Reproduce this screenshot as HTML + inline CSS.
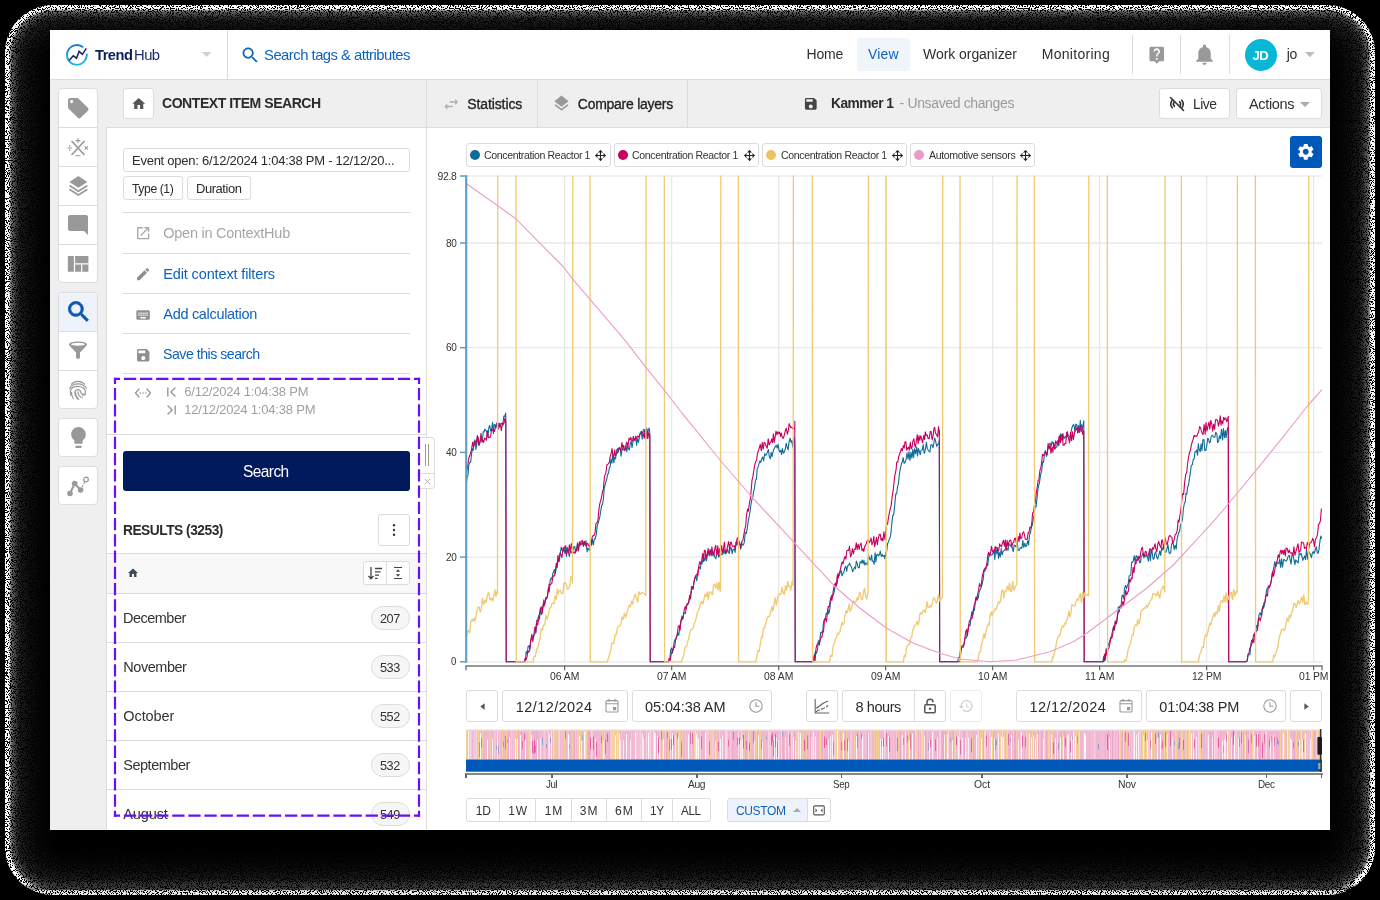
<!DOCTYPE html>
<html><head><meta charset="utf-8"><title>TrendHub</title>
<style>
html,body{margin:0;padding:0;background:#000;width:1380px;height:900px;overflow:hidden}
body{font-family:"Liberation Sans",sans-serif;position:relative}
.w{position:absolute;left:50px;top:30px;width:1280px;height:800px;background:#fff;overflow:hidden}
.w div,.w span,.w svg{position:absolute;box-sizing:content-box}
.w span{white-space:nowrap;line-height:1;will-change:opacity}
.sh{position:absolute;left:0;top:0}

</style></head>
<body>
<svg width="0" height="0" style="position:absolute"><defs>
<filter id="dz" x="0" y="0" width="100%" height="100%" color-interpolation-filters="sRGB">
<feTurbulence type="fractalNoise" baseFrequency="0.9" numOctaves="1" seed="7" result="n"/>
<feColorMatrix in="n" type="matrix" values="0 0 0 0 0 0 0 0 0 0 0 0 0 0 0 60 0 0 0 -32.4" result="dots"/>
<feComposite in="dots" in2="SourceGraphic" operator="over"/>
</filter></defs></svg>
<div class="sh" style="left:5px;top:5px;width:1370px;height:890px;border-radius:48px;background:#000;box-shadow:inset 0 0 2px 5px #fff,inset 0 0 8px 8px rgba(255,255,255,.45),inset 0 0 34px 14px rgba(255,255,255,.22);filter:url(#dz);overflow:hidden"><div style="position:absolute;left:0;right:0;bottom:0;height:12px;background:linear-gradient(to top,rgba(0,0,0,.1) 0,rgba(0,0,0,.1) 4.5px,rgba(0,0,0,.5) 5.5px,rgba(0,0,0,.3) 9px,rgba(0,0,0,0) 12px)"></div></div>

<div class="w">
<div style="left:0px;top:49px;width:1280px;height:1px;background:#dcdcdc"></div>
<svg viewBox="0 0 24 24" style="left:15.1px;top:13.8px;width:24px;height:24px;"><defs><linearGradient id="lg" x1="0" y1="0" x2="0" y2="1"><stop offset="0" stop-color="#1878d0"/><stop offset="1" stop-color="#19b9ea"/></linearGradient></defs>
<path d="M18.200 3.300A9.900 9.900 0 1 0 21.700 9.600" fill="none" stroke="url(#lg)" stroke-width="1.800"/>
<path d="M4.100 16.500L8.300 11.800 11.500 14.200 14.100 7.400 17.400 10.300 21.300 4.400" fill="none" stroke="#1d1f6e" stroke-width="1.500"/></svg>
<span id="t0" style="left:45.40px;top:17.00px;font-size:15.2px;color:#0a1e5e;font-weight:700;letter-spacing:-0.532px;transform:scaleX(0.9661);transform-origin:0 0;">Trend</span>
<span id="t1" style="left:83.90px;top:17.00px;font-size:15.2px;color:#1a2c6b;letter-spacing:-0.532px;transform:scaleX(0.9735);transform-origin:0 0;">Hub</span>
<svg viewBox="0 0 9.3 5" style="left:152.3px;top:21.6px;width:9.3px;height:5px;"><polygon points="0,0 9.299999999999983,0 4.6499999999999915,5.0" fill="#cfcfcf"/></svg>
<div style="left:177px;top:0px;width:1px;height:49px;background:#dcdcdc"></div>
<svg viewBox="0 0 24 24" style="left:189.50px;top:14.50px;width:20.5px;height:20.5px;"><path fill="#0f62be" d="M15.5 14h-.79l-.28-.27C15.41 12.59 16 11.11 16 9.5 16 5.91 13.09 3 9.5 3S3 5.91 3 9.5 5.91 16 9.5 16c1.61 0 3.09-.59 4.23-1.57l.27.28v.79l5 4.99L20.49 19l-4.99-5zm-6 0C7.01 14 5 11.99 5 9.5S7.01 5 9.5 5 14 7.01 14 9.5 11.99 14 9.5 14z"/></svg>
<span id="t2" style="left:214.20px;top:17.00px;font-size:15px;color:#0f62be;letter-spacing:-0.525px;transform:scaleX(0.9897);transform-origin:0 0;">Search tags &amp; attributes</span>
<span id="t3" style="left:756.60px;top:17.00px;font-size:14px;color:#2f2f2f;letter-spacing:-0.253px;">Home</span>
<div style="left:807px;top:8px;width:53px;height:33px;background:#f0f4fb;border-radius:3px"></div>
<span id="t4" style="left:817.90px;top:17.00px;font-size:14px;color:#0f62be;letter-spacing:0.202px;">View</span>
<span id="t5" style="left:873.00px;top:17.00px;font-size:14px;color:#2f2f2f;letter-spacing:-0.052px;">Work organizer</span>
<span id="t6" style="left:991.70px;top:17.00px;font-size:14px;color:#2f2f2f;letter-spacing:0.292px;">Monitoring</span>
<div style="left:1082px;top:5px;width:1px;height:39px;background:#dcdcdc"></div>
<div style="left:1130px;top:5px;width:1px;height:39px;background:#dcdcdc"></div>
<div style="left:1179px;top:5px;width:1px;height:39px;background:#dcdcdc"></div>
<svg viewBox="0 0 24 24" style="left:1096.50px;top:15.20px;width:19.5px;height:19.5px;"><path fill="#999" d="M19 2H5c-1.11 0-2 .9-2 2v14c0 1.1.89 2 2 2h4l3 3 3-3h4c1.1 0 2-.9 2-2V4c0-1.1-.9-2-2-2zm-6 16h-2v-2h2v2zm2.07-7.75l-.9.92C13.45 11.9 13 12.5 13 14h-2v-.5c0-1.1.45-2.1 1.17-2.83l1.24-1.26c.37-.36.59-.86.59-1.41 0-1.1-.9-2-2-2s-2 .9-2 2H8c0-2.21 1.79-4 4-4s4 1.79 4 4c0 .88-.36 1.68-.93 2.25z"/></svg>
<svg viewBox="0 0 24 24" style="left:1142.40px;top:12.30px;width:25px;height:25px;"><path fill="#999" d="M12 22c1.1 0 2-.9 2-2h-4c0 1.1.89 2 2 2zm6-6v-5c0-3.07-1.64-5.64-4.5-6.32V4c0-.83-.67-1.5-1.5-1.5s-1.5.67-1.5 1.5v.68C7.63 5.36 6 7.92 6 11v5l-2 2v1h16v-1l-2-2z"/></svg>
<div style="left:1195px;top:9px;width:32px;height:32px;background:#08b7d4;border-radius:50%"></div>
<span id="t7" style="left:1202.40px;top:19.00px;font-size:13px;color:#fff;font-weight:700;letter-spacing:-0.425px;">JD</span>
<span id="t8" style="left:1236.80px;top:17.00px;font-size:14px;color:#2f2f2f;letter-spacing:-0.406px;">jo</span>
<svg viewBox="0 0 9.8 5.2" style="left:1255px;top:22px;width:9.8px;height:5.2px;"><polygon points="0,0 9.799999999999955,0 4.899999999999977,5.200000000000003" fill="#bbb"/></svg>
<div style="left:0px;top:50px;width:1280px;height:47px;background:#efefef"></div>
<div style="left:56px;top:97px;width:1224px;height:1px;background:#dcdcdc"></div>
<div style="left:0px;top:97px;width:56px;height:703px;background:#efefef"></div>
<div style="left:56px;top:97px;width:1px;height:703px;background:#dcdcdc"></div>
<div style="left:376px;top:50px;width:1px;height:750px;background:#dcdcdc"></div>
<div style="left:73px;top:58px;width:29px;height:29px;background:#fff;border:1px solid #dcdcdc;border-radius:3px;"></div>
<svg viewBox="0 0 24 24" style="left:80.50px;top:66.00px;width:15.5px;height:15.5px;"><path fill="#555" d="M10 20v-6h4v6h5v-8h3L12 3 2 12h3v8z"/></svg>
<span id="t9" style="left:112.30px;top:65.00px;font-size:15px;color:#2b2b2b;font-weight:700;letter-spacing:-0.525px;transform:scaleX(0.9379);transform-origin:0 0;">CONTEXT ITEM SEARCH</span>
<svg viewBox="0 0 24 24" style="left:391.50px;top:65.00px;width:18.5px;height:18.5px;"><path fill="#b0b0b0" d="M6.99 11L3 15l3.99 4v-3H14v-2H6.99v-3zM21 9l-3.99-4v3H10v2h7.01v3L21 9z"/></svg>
<span id="t10" style="left:417.20px;top:67.00px;font-size:14px;color:#222;letter-spacing:-0.102px;-webkit-text-stroke:.3px #222;">Statistics</span>
<div style="left:487px;top:50px;width:1px;height:47px;background:#dcdcdc"></div>
<svg viewBox="0 0 24 24" style="left:502.30px;top:64.00px;width:19px;height:19px;"><path fill="#999" d="M11.99 18.54l-7.37-5.73L3 14.07l9 7 9-7-1.63-1.27-7.38 5.74zM12 16l7.36-5.73L21 9l-9-7-9 7 1.63 1.27L12 16z"/></svg>
<span id="t11" style="left:527.80px;top:67.00px;font-size:14px;color:#222;letter-spacing:-0.264px;-webkit-text-stroke:.3px #222;">Compare layers</span>
<div style="left:637px;top:50px;width:1px;height:47px;background:#dcdcdc"></div>
<svg viewBox="0 0 24 24" style="left:753.20px;top:66.20px;width:15.6px;height:15.6px;"><path fill="#444" d="M17 3H5c-1.11 0-2 .9-2 2v14c0 1.1.89 2 2 2h14c1.1 0 2-.9 2-2V7l-4-4zm-5 16c-1.66 0-3-1.34-3-3s1.34-3 3-3 3 1.34 3 3-1.34 3-3 3zm3-10H5V5h10v4z"/></svg>
<span id="t12" style="left:781.40px;top:66.00px;font-size:14px;color:#2b2b2b;font-weight:700;letter-spacing:-0.490px;transform:scaleX(0.9802);transform-origin:0 0;">Kammer 1</span>
<span id="t13" style="left:849.60px;top:66.00px;font-size:14px;color:#9a9a9a;letter-spacing:-0.365px;">- Unsaved changes</span>
<div style="left:1109px;top:58px;width:69px;height:29px;background:#fff;border:1px solid #dcdcdc;border-radius:3px;"></div>
<svg viewBox="0 0 18 18" style="left:1118px;top:65px;width:18px;height:18px;"><g fill="none" stroke="#333" stroke-width="1.6" stroke-linecap="round">
<path d="M4.2 12.8A6.2 6.2 0 0 1 4.2 5.2"/><path d="M13.8 5.2A6.2 6.2 0 0 1 13.8 12.8"/>
<path d="M6.4 11.3A3.4 3.4 0 0 1 6.4 6.7"/><path d="M11.6 6.7A3.4 3.4 0 0 1 11.6 11.3"/>
<path d="M2.5 2.5L15.5 15.5"/></g></svg>
<span id="t14" style="left:1142.50px;top:67.00px;font-size:14.5px;color:#2f2f2f;letter-spacing:-0.508px;transform:scaleX(0.9567);transform-origin:0 0;">Live</span>
<div style="left:1186px;top:58px;width:84px;height:29px;background:#fff;border:1px solid #dcdcdc;border-radius:3px;"></div>
<span id="t15" style="left:1199.00px;top:67.00px;font-size:14.5px;color:#2f2f2f;letter-spacing:-0.327px;">Actions</span>
<svg viewBox="0 0 10 5" style="left:1250px;top:71.5px;width:10px;height:5px;"><polygon points="0,0 10,0 5.0,5.0" fill="#aaa"/></svg>
<div style="left:8px;top:58px;width:38px;height:193px;background:#fff;border:1px solid #dcdcdc;border-radius:4px;"></div>
<div style="left:9px;top:97px;width:38px;height:1px;background:#dcdcdc"></div>
<div style="left:9px;top:136px;width:38px;height:1px;background:#dcdcdc"></div>
<div style="left:9px;top:175px;width:38px;height:1px;background:#dcdcdc"></div>
<div style="left:9px;top:214px;width:38px;height:1px;background:#dcdcdc"></div>
<div style="left:8px;top:262px;width:38px;height:115px;background:#fff;border:1px solid #dcdcdc;border-radius:4px;"></div>
<div style="left:9px;top:301px;width:38px;height:1px;background:#dcdcdc"></div>
<div style="left:9px;top:340px;width:38px;height:1px;background:#dcdcdc"></div>
<div style="left:9px;top:263px;width:38px;height:38px;background:#eef3fb;border-radius:3px 3px 0 0"></div>
<div style="left:8px;top:388px;width:38px;height:37px;background:#fff;border:1px solid #dcdcdc;border-radius:4px;"></div>
<div style="left:8px;top:436px;width:38px;height:37px;background:#fff;border:1px solid #dcdcdc;border-radius:4px;"></div>
<svg viewBox="0 0 24 24" style="left:15.90px;top:65.60px;width:24.5px;height:24.5px;"><path fill="#999" d="M21.41 11.58l-9-9C12.05 2.22 11.55 2 11 2H4c-1.1 0-2 .9-2 2v7c0 .55.22 1.05.59 1.42l9 9c.36.36.86.58 1.41.58.55 0 1.05-.22 1.41-.59l7-7c.37-.36.59-.86.59-1.41 0-.55-.23-1.06-.59-1.42zM5.5 7C4.67 7 4 6.33 4 5.5S4.67 4 5.5 4 7 4.67 7 5.5 6.33 7 5.5 7z"/></svg>
<svg viewBox="0 0 24 24" style="left:16.2px;top:106px;width:24px;height:24px;"><g stroke="#999" stroke-width="1.7" fill="none" stroke-linecap="round"><path d="M6 5.5L18 18.5M18 5.5L6 18.5"/>
<path d="M12 2.6v4M10 4.6h4" stroke-width="1.1"/><path d="M10 19.8h4" stroke-width="1.1"/>
<path d="M1.8 12h4" stroke-width="1.1"/><path d="M19 10.6l2.6 2.6M21.6 10.6L19 13.2" stroke-width="1.1"/></g>
<circle cx="3.8" cy="9.9" r=".8" fill="#999"/><circle cx="3.8" cy="14.1" r=".8" fill="#999"/></svg>
<svg viewBox="0 0 24 24" style="left:16.8px;top:143.6px;width:22.8px;height:22.8px;"><path d="M12 2.200L2.500 8.300L12 14.400L21.500 8.300Z" fill="#999"/><g fill="none" stroke="#999" stroke-width="1.900" stroke-linejoin="round" stroke-linecap="round"><path d="M3.300 12.600L12 18.100L20.700 12.600"/><path d="M3.300 16.600L12 22.100L20.700 16.600"/></g></svg>
<svg viewBox="0 0 24 24" style="left:16.00px;top:182.50px;width:24px;height:24px;"><path fill="#999" d="M21.99 4c0-1.1-.89-2-1.99-2H4c-1.1 0-2 .9-2 2v12c0 1.1.9 2 2 2h14l4 4-.01-18z"/></svg>
<svg viewBox="0 0 24 24" style="left:12.70px;top:220.30px;width:29px;height:29px;"><path fill="#999" d="M10 18h5v-6h-5v6zm-6 0h5V5H4v13zm12 0h5v-6h-5v6zM10 5v6h11V5H10z"/></svg>
<svg viewBox="0 0 24 24" style="left:15.20px;top:268.20px;width:27.5px;height:27.5px;"><path stroke="#0b57b4" stroke-width=".7" fill="#0b57b4" d="M15.5 14h-.79l-.28-.27C15.41 12.59 16 11.11 16 9.5 16 5.91 13.09 3 9.5 3S3 5.91 3 9.5 5.91 16 9.5 16c1.61 0 3.09-.59 4.23-1.57l.27.28v.79l5 4.99L20.49 19l-4.99-5zm-6 0C7.01 14 5 11.99 5 9.5S7.01 5 9.5 5 14 7.01 14 9.5 11.99 14 9.5 14z"/></svg>
<svg viewBox="0 0 24 24" style="left:16px;top:308.5px;width:24px;height:24px;"><path d="M3 5.400C3 3.500 7 2.400 12 2.400s9 1.100 9 3c0 .6-.3 1-.8 1.500L14 13.600V18.300c0 .9-.9 1.600-2 1.600s-2-.7-2-1.600V13.600L3.800 6.900C3.300 6.400 3 6 3 5.400z" fill="#999"/><ellipse cx="12" cy="5.200" rx="7" ry="1.500" fill="#fff"/></svg>
<svg viewBox="0 0 24 24" style="left:16px;top:347.5px;width:24px;height:24px;"><g fill="none" stroke="#999" stroke-width="1.2" stroke-linecap="round">
<path d="M5.500 6.200C7.200 4.300 9.500 3.300 12 3.300s4.800 1 6.500 2.900"/>
<path d="M3.600 10.500C5.300 7.700 8.400 5.900 12 5.900s6.700 1.800 8.400 4.600"/>
<path d="M5 17.500c-.6-1.700-.8-3.300-.5-4.900C5.100 9.900 8.200 8.300 12 8.300s7 2.200 7.400 5.200c.2 1.300-.5 2.600-1.800 2.800-1.300.2-2.500-.7-2.800-2-.3-1.500-1.400-2.600-2.900-2.600-1.700 0-3 1.300-3 3 0 2.500 1.100 4.600 2.700 6.300"/>
<path d="M7.200 20.300c-1.300-2-1.900-4-1.700-6"/>
<path d="M12 13.800c0 2.900 1.600 5.200 4.300 5.900"/>
<path d="M9.400 14.300c0 3 1.500 5.400 3.300 6.900"/>
<path d="M16.800 17.200c1.200.1 2.200-.3 2.900-1"/></g></svg>
<svg viewBox="0 0 24 24" style="left:15.60px;top:395.00px;width:25px;height:25px;"><path fill="#999" d="M9 21c0 .55.45 1 1 1h4c.55 0 1-.45 1-1v-1H9v1zm3-19C8.14 2 5 5.14 5 9c0 2.38 1.19 4.47 3 5.74V17c0 .55.45 1 1 1h6c.55 0 1-.45 1-1v-2.26c1.81-1.27 3-3.36 3-5.74 0-3.86-3.14-7-7-7z"/></svg>
<svg viewBox="0 0 24 24" style="left:16px;top:444px;width:24px;height:24px;"><g stroke="#999" fill="none"><path d="M4 19.500L8.700 9.500L14.600 16" stroke-width="2"/><path d="M14.600 16L19.700 6.200" stroke-width="1.300" stroke-dasharray="1.800 1.600"/></g>
<circle cx="4" cy="19.500" r="2.800" fill="#999"/><circle cx="8.700" cy="9.500" r="2.800" fill="#999"/><circle cx="14.600" cy="16" r="2.800" fill="#999"/><circle cx="20" cy="5.500" r="2.300" fill="#fff" stroke="#999" stroke-width="1.300"/></svg>
<div style="left:73px;top:118px;width:285px;height:22px;background:#fff;border:1px solid #dcdcdc;border-radius:3px;"></div>
<span id="t16" style="left:82.00px;top:124.00px;font-size:13px;color:#2b2b2b;letter-spacing:-0.254px;">Event open: 6/12/2024 1:04:38 PM - 12/12/20...</span>
<div style="left:73px;top:146px;width:58px;height:22px;background:#fff;border:1px solid #dcdcdc;border-radius:3px;"></div>
<span id="t17" style="left:82.00px;top:152.00px;font-size:13px;color:#2b2b2b;letter-spacing:-0.455px;transform:scaleX(0.9393);transform-origin:0 0;">Type (1)</span>
<div style="left:137px;top:146px;width:62px;height:22px;background:#fff;border:1px solid #dcdcdc;border-radius:3px;"></div>
<span id="t18" style="left:146.30px;top:152.00px;font-size:13px;color:#2b2b2b;letter-spacing:-0.455px;transform:scaleX(0.9988);transform-origin:0 0;">Duration</span>
<div style="left:73px;top:182px;width:287px;height:1px;background:#dcdcdc"></div>
<div style="left:73px;top:223px;width:287px;height:1px;background:#dcdcdc"></div>
<div style="left:73px;top:263px;width:287px;height:1px;background:#dcdcdc"></div>
<div style="left:73px;top:303px;width:287px;height:1px;background:#dcdcdc"></div>
<div style="left:73px;top:343px;width:287px;height:1px;background:#dcdcdc"></div>
<svg viewBox="0 0 24 24" style="left:85.00px;top:194.80px;width:16.3px;height:16.3px;"><path fill="#a8a8a8" d="M19 19H5V5h7V3H5c-1.11 0-2 .9-2 2v14c0 1.1.89 2 2 2h14c1.1 0 2-.9 2-2v-7h-2v7zM14 3v2h3.59l-9.83 9.83 1.41 1.41L19 6.41V10h2V3h-7z"/></svg>
<span id="t19" style="left:113.30px;top:196.00px;font-size:14.5px;color:#a6a6a6;letter-spacing:-0.264px;">Open in ContextHub</span>
<svg viewBox="0 0 24 24" style="left:85.00px;top:236.20px;width:16.2px;height:16.2px;"><path fill="#8f8f8f" d="M3 17.25V21h3.75L17.81 9.94l-3.75-3.75L3 17.25zM20.71 7.04c.39-.39.39-1.02 0-1.41l-2.34-2.34c-.39-.39-1.02-.39-1.41 0l-1.83 1.83 3.75 3.75 1.83-1.83z"/></svg>
<span id="t20" style="left:113.30px;top:237.00px;font-size:14.5px;color:#0f62be;letter-spacing:-0.139px;">Edit context filters</span>
<svg viewBox="0 0 24 24" style="left:85.00px;top:276.50px;width:16.2px;height:16.2px;"><path fill="#8f8f8f" d="M20 5H4c-1.1 0-1.99.9-1.99 2L2 17c0 1.1.9 2 2 2h16c1.1 0 2-.9 2-2V7c0-1.1-.9-2-2-2zm-9 3h2v2h-2V8zm0 3h2v2h-2v-2zM8 8h2v2H8V8zm0 3h2v2H8v-2zm-1 2H5v-2h2v2zm0-3H5V8h2v2zm9 7H8v-2h8v2zm0-4h-2v-2h2v2zm0-3h-2V8h2v2zm3 3h-2v-2h2v2zm0-3h-2V8h2v2z"/></svg>
<span id="t21" style="left:113.30px;top:277.00px;font-size:14.5px;color:#0f62be;letter-spacing:-0.310px;">Add calculation</span>
<svg viewBox="0 0 24 24" style="left:84.50px;top:316.50px;width:16.5px;height:16.5px;"><path fill="#8f8f8f" d="M17 3H5c-1.11 0-2 .9-2 2v14c0 1.1.89 2 2 2h14c1.1 0 2-.9 2-2V7l-4-4zm-5 16c-1.66 0-3-1.34-3-3s1.34-3 3-3 3 1.34 3 3-1.34 3-3 3zm3-10H5V5h10v4z"/></svg>
<span id="t22" style="left:113.30px;top:317.00px;font-size:14.5px;color:#0f62be;letter-spacing:-0.508px;transform:scaleX(0.9760);transform-origin:0 0;">Save this search</span>
<svg viewBox="0 0 18 14" style="left:84px;top:356px;width:18px;height:14px;"><g fill="none" stroke="#999" stroke-width="1.3" stroke-linecap="round" stroke-linejoin="round"><path d="M5 3L1.500 7L5 11"/><path d="M13 3L16.500 7L13 11"/></g><circle cx="6.300" cy="7" r=".8" fill="#999"/><circle cx="9" cy="7" r=".8" fill="#999"/><circle cx="11.700" cy="7" r=".8" fill="#999"/></svg>
<svg viewBox="0 0 11 12" style="left:116px;top:356px;width:11px;height:12px;"><g fill="none" stroke="#999" stroke-width="1.400" stroke-linecap="round" stroke-linejoin="round"><path d="M1.800 2v8"/><path d="M9 2L4.800 6L9 10"/></g></svg>
<svg viewBox="0 0 11 12" style="left:116px;top:374px;width:11px;height:12px;"><g fill="none" stroke="#999" stroke-width="1.400" stroke-linecap="round" stroke-linejoin="round"><path d="M9.200 2v8"/><path d="M2 2L6.200 6L2 10"/></g></svg>
<span id="t23" style="left:134.20px;top:355.00px;font-size:13px;color:#a0a0a0;letter-spacing:-0.186px;">6/12/2024 1:04:38 PM</span>
<span id="t24" style="left:134.20px;top:373.00px;font-size:13px;color:#a0a0a0;letter-spacing:-0.194px;">12/12/2024 1:04:38 PM</span>
<div style="left:57px;top:404px;width:319px;height:1px;background:#dcdcdc"></div>
<div style="left:73px;top:421px;width:287px;height:40px;background:#001a5c;border-radius:3px"></div>
<span id="t25" style="left:193.30px;top:434.00px;font-size:16px;color:#fff;letter-spacing:-0.560px;transform:scaleX(0.9644);transform-origin:0 0;">Search</span>
<span id="t26" style="left:73.30px;top:493.00px;font-size:14.5px;color:#2b2b2b;font-weight:700;letter-spacing:-0.508px;transform:scaleX(0.9476);transform-origin:0 0;">RESULTS (3253)</span>
<div style="left:328px;top:484px;width:30px;height:30px;background:#fff;border:1px solid #dcdcdc;border-radius:3px;"></div>
<svg viewBox="0 0 8 16" style="left:340px;top:492px;width:8px;height:16px;"><circle cx="4" cy="3.200" r="1.200" fill="#333"/><circle cx="4" cy="8" r="1.200" fill="#333"/><circle cx="4" cy="12.800" r="1.200" fill="#333"/></svg>
<div style="left:57px;top:523px;width:319px;height:1px;background:#dcdcdc"></div>
<div style="left:57px;top:524px;width:319px;height:39px;background:#f8f8f8"></div>
<svg viewBox="0 0 24 24" style="left:77.00px;top:537.00px;width:12px;height:12px;"><path fill="#3d4d5c" d="M10 20v-6h4v6h5v-8h3L12 3 2 12h3v8z"/></svg>
<div style="left:313px;top:531px;width:45px;height:22px;background:#fff;border:1px solid #dcdcdc;border-radius:3px;"></div>
<div style="left:336px;top:532px;width:1px;height:22px;background:#dcdcdc"></div>
<svg viewBox="0 0 16 16" style="left:317px;top:535px;width:16px;height:16px;"><g fill="none" stroke="#444" stroke-width="1.300"><path d="M4 2v11.500M1.500 11L4 13.800L6.500 11"/><path d="M8 3.500h7M8 6.800h5.500M8 10.100h4M8 13.400h2.500"/></g></svg>
<svg viewBox="0 0 16 16" style="left:340px;top:535px;width:16px;height:16px;"><g fill="none" stroke="#444" stroke-width="1.200"><path d="M4 2.500h8M4 13.500h8"/></g><path d="M8 4.200L10.200 6.800H5.800zM8 11.800L10.200 9.200H5.800z" fill="#444"/></svg>
<div style="left:57px;top:563px;width:319px;height:1px;background:#dcdcdc"></div>
<span id="t27" style="left:73.30px;top:581.00px;font-size:14.5px;color:#333;letter-spacing:-0.508px;transform:scaleX(0.9994);transform-origin:0 0;">December</span>
<div style="left:321px;top:576px;width:37px;height:22px;background:#f6f6f6;border:1px solid #dcdcdc;border-radius:12px;"></div>
<span id="t28" style="left:330.30px;top:582.00px;font-size:13px;color:#333;letter-spacing:-0.455px;transform:scaleX(0.9763);transform-origin:0 0;">207</span>
<div style="left:57px;top:612px;width:319px;height:1px;background:#dcdcdc"></div>
<span id="t29" style="left:73.30px;top:630.00px;font-size:14.5px;color:#333;letter-spacing:-0.470px;">November</span>
<div style="left:321px;top:625px;width:37px;height:22px;background:#f6f6f6;border:1px solid #dcdcdc;border-radius:12px;"></div>
<span id="t30" style="left:330.30px;top:631.00px;font-size:13px;color:#333;letter-spacing:-0.455px;transform:scaleX(0.9763);transform-origin:0 0;">533</span>
<div style="left:57px;top:661px;width:319px;height:1px;background:#dcdcdc"></div>
<span id="t31" style="left:73.30px;top:679.00px;font-size:14.5px;color:#333;letter-spacing:-0.099px;">October</span>
<div style="left:321px;top:674px;width:37px;height:22px;background:#f6f6f6;border:1px solid #dcdcdc;border-radius:12px;"></div>
<span id="t32" style="left:330.30px;top:680.00px;font-size:13px;color:#333;letter-spacing:-0.455px;transform:scaleX(0.9763);transform-origin:0 0;">552</span>
<div style="left:57px;top:710px;width:319px;height:1px;background:#dcdcdc"></div>
<span id="t33" style="left:73.30px;top:728.00px;font-size:14.5px;color:#333;letter-spacing:-0.492px;">September</span>
<div style="left:321px;top:723px;width:37px;height:22px;background:#f6f6f6;border:1px solid #dcdcdc;border-radius:12px;"></div>
<span id="t34" style="left:330.30px;top:729.00px;font-size:13px;color:#333;letter-spacing:-0.455px;transform:scaleX(0.9763);transform-origin:0 0;">532</span>
<div style="left:57px;top:759px;width:319px;height:1px;background:#dcdcdc"></div>
<span id="t35" style="left:73.30px;top:777.00px;font-size:14.5px;color:#333;letter-spacing:-0.131px;">August</span>
<div style="left:321px;top:772px;width:37px;height:22px;background:#f6f6f6;border:1px solid #dcdcdc;border-radius:12px;"></div>
<span id="t36" style="left:330.30px;top:778.00px;font-size:13px;color:#333;letter-spacing:-0.455px;transform:scaleX(0.9763);transform-origin:0 0;">549</span>
<div style="left:370px;top:407px;width:14px;height:50px;background:#fff;border:1px solid #dcdcdc;border-left:none;border-radius:0 4px 4px 0"></div>
<div style="left:370px;top:443px;width:14px;height:1px;background:#dcdcdc"></div>
<div style="left:375.3px;top:414px;width:1px;height:22px;background:#999"></div>
<div style="left:378.3px;top:414px;width:1px;height:22px;background:#999"></div>
<svg viewBox="0 0 7 7" style="left:373.7px;top:447.5px;width:7px;height:7px;"><path d="M.8 .8L6.200 6.200M6.200 .8L.8 6.200" stroke="#aaa" stroke-width=".9" fill="none"/></svg>
<div style="left:416px;top:113px;width:142.5px;height:22px;background:#fff;border:1px solid #dcdcdc;border-radius:3px;"></div>
<div style="left:420px;top:120.3px;width:10.2px;height:10.2px;background:#0f6b99;border-radius:50%"></div>
<span id="t37" style="left:433.90px;top:120.00px;font-size:11px;color:#333;letter-spacing:-0.385px;transform:scaleX(0.9615);transform-origin:0 0;">Concentration Reactor 1</span>
<svg viewBox="0 0 11 11" style="left:545.1px;top:119.9px;width:11px;height:11px;"><g fill="none" stroke="#222" stroke-width="1.05" stroke-linecap="round" stroke-linejoin="round"><path d="M5.500 .8v9.400M.8 5.500h9.400"/><path d="M3.900 2.300L5.500 .7L7.100 2.300M3.900 8.700L5.500 10.300L7.100 8.700M2.300 3.900L.7 5.500L2.300 7.100M8.700 3.900L10.300 5.500L8.700 7.100"/></g></svg>
<div style="left:564.3px;top:113px;width:142.7px;height:22px;background:#fff;border:1px solid #dcdcdc;border-radius:3px;"></div>
<div style="left:568.3px;top:120.3px;width:10.2px;height:10.2px;background:#c6005f;border-radius:50%"></div>
<span id="t38" style="left:582.40px;top:120.00px;font-size:11px;color:#333;letter-spacing:-0.385px;transform:scaleX(0.9597);transform-origin:0 0;">Concentration Reactor 1</span>
<svg viewBox="0 0 11 11" style="left:693.6px;top:119.9px;width:11px;height:11px;"><g fill="none" stroke="#222" stroke-width="1.05" stroke-linecap="round" stroke-linejoin="round"><path d="M5.500 .8v9.400M.8 5.500h9.400"/><path d="M3.900 2.300L5.500 .7L7.100 2.300M3.900 8.700L5.500 10.300L7.100 8.700M2.300 3.900L.7 5.500L2.300 7.100M8.700 3.900L10.300 5.500L8.700 7.100"/></g></svg>
<div style="left:712.3px;top:113px;width:142.4px;height:22px;background:#fff;border:1px solid #dcdcdc;border-radius:3px;"></div>
<div style="left:716.3px;top:120.3px;width:10.2px;height:10.2px;background:#edc25f;border-radius:50%"></div>
<span id="t39" style="left:730.70px;top:120.00px;font-size:11px;color:#333;letter-spacing:-0.385px;transform:scaleX(0.9588);transform-origin:0 0;">Concentration Reactor 1</span>
<svg viewBox="0 0 11 11" style="left:841.7px;top:119.9px;width:11px;height:11px;"><g fill="none" stroke="#222" stroke-width="1.05" stroke-linecap="round" stroke-linejoin="round"><path d="M5.500 .8v9.400M.8 5.500h9.400"/><path d="M3.900 2.300L5.500 .7L7.100 2.300M3.900 8.700L5.500 10.300L7.100 8.700M2.300 3.900L.7 5.500L2.300 7.100M8.700 3.900L10.300 5.500L8.700 7.100"/></g></svg>
<div style="left:860.3px;top:113px;width:122.7px;height:22px;background:#fff;border:1px solid #dcdcdc;border-radius:3px;"></div>
<div style="left:864.3px;top:120.3px;width:10.2px;height:10.2px;background:#ea9bc8;border-radius:50%"></div>
<span id="t40" style="left:879.00px;top:120.00px;font-size:11px;color:#333;letter-spacing:-0.385px;transform:scaleX(0.9626);transform-origin:0 0;">Automotive sensors</span>
<svg viewBox="0 0 11 11" style="left:970.2px;top:119.9px;width:11px;height:11px;"><g fill="none" stroke="#222" stroke-width="1.05" stroke-linecap="round" stroke-linejoin="round"><path d="M5.500 .8v9.400M.8 5.500h9.400"/><path d="M3.900 2.300L5.500 .7L7.100 2.300M3.900 8.700L5.500 10.300L7.100 8.700M2.300 3.900L.7 5.500L2.300 7.100M8.700 3.900L10.300 5.500L8.700 7.100"/></g></svg>
<div style="left:1240px;top:106px;width:32px;height:32px;background:#0059b8;border-radius:3px"></div>
<svg viewBox="0 0 24 24" style="left:1246.20px;top:112.20px;width:19.6px;height:19.6px;"><path fill="#fff" d="M19.14 12.94c.04-.3.06-.61.06-.94 0-.32-.02-.64-.07-.94l2.03-1.58c.18-.14.23-.41.12-.61l-1.92-3.32c-.12-.22-.37-.29-.59-.22l-2.39.96c-.5-.38-1.03-.7-1.62-.94l-.36-2.54c-.04-.24-.24-.41-.48-.41h-3.84c-.24 0-.43.17-.47.41l-.36 2.54c-.59.24-1.13.57-1.62.94l-2.39-.96c-.22-.08-.47 0-.59.22L2.74 8.87c-.12.21-.08.47.12.61l2.03 1.58c-.05.3-.09.63-.09.94s.02.64.07.94l-2.03 1.58c-.18.14-.23.41-.12.61l1.92 3.32c.12.22.37.29.59.22l2.39-.96c.5.38 1.03.7 1.62.94l.36 2.54c.05.24.24.41.48.41h3.84c.24 0 .44-.17.47-.41l.36-2.54c.59-.24 1.13-.56 1.62-.94l2.39.96c.22.08.47 0 .59-.22l1.92-3.32c.12-.22.07-.47-.12-.61l-2.01-1.58zM12 15.6c-1.98 0-3.6-1.62-3.6-3.6s1.62-3.6 3.6-3.6 3.6 1.62 3.6 3.6-1.62 3.6-3.6 3.6z"/></svg>
<svg viewBox="427 128 903 562" style="left:377px;top:98px;width:903px;height:562px"><path d="M466.0 661.8H1322.0" stroke="#e9e9e9" stroke-width="1.3"/><path d="M466.0 557.1H1322.0" stroke="#e9e9e9" stroke-width="1.3"/><path d="M466.0 452.4H1322.0" stroke="#e9e9e9" stroke-width="1.3"/><path d="M466.0 347.7H1322.0" stroke="#e9e9e9" stroke-width="1.3"/><path d="M466.0 243.0H1322.0" stroke="#e9e9e9" stroke-width="1.3"/><path d="M466.0 176.0H1322.0" stroke="#ececec" stroke-width="1.6"/><path d="M564.7 176.0V661.8" stroke="#e6e6e6" stroke-width="1.2"/><path d="M671.7 176.0V661.8" stroke="#e6e6e6" stroke-width="1.2"/><path d="M778.7 176.0V661.8" stroke="#e6e6e6" stroke-width="1.2"/><path d="M885.7 176.0V661.8" stroke="#e6e6e6" stroke-width="1.2"/><path d="M992.7 176.0V661.8" stroke="#e6e6e6" stroke-width="1.2"/><path d="M1099.7 176.0V661.8" stroke="#e6e6e6" stroke-width="1.2"/><path d="M1206.7 176.0V661.8" stroke="#e6e6e6" stroke-width="1.2"/><path d="M1313.7 176.0V661.8" stroke="#e6e6e6" stroke-width="1.2"/><clipPath id="pc"><rect x="466.0" y="175.4" width="856.0" height="488.29999999999995"/></clipPath><g clip-path="url(#pc)" fill="none" stroke-linejoin="round"><path d="M466.0 487.9L467.0 477.6L467.9 475.5L468.9 464.6L469.9 462.1L470.7 462.2L471.6 453.4L472.4 448.6L473.2 450.5L473.9 442.1L475.0 440.0L475.9 449.4L476.8 442.6L477.6 436.0L478.5 445.2L479.5 444.5L480.6 439.3L481.5 439.8L482.4 441.0L483.2 431.7L484.0 432.1L484.8 429.0L485.9 430.7L486.9 432.0L487.9 436.9L488.9 427.3L489.7 425.4L490.7 431.0L491.6 429.7L492.5 422.2L493.4 433.6L494.2 424.3L495.3 426.2L496.2 424.8L497.2 428.1L498.2 423.1L499.1 427.1L499.9 424.4L501.0 423.6L502.0 423.3L502.8 425.8L503.8 416.0L504.7 416.5L505.7 413.1L505.8 417.9L506.2 661.8L506.7 661.8L507.8 661.8L508.9 661.8L509.9 661.8L510.9 661.8L511.9 661.8L512.7 661.8L513.6 661.8L514.6 661.8L515.4 661.8L516.2 661.8L517.3 661.8L518.3 661.8L519.2 661.8L520.2 661.8L521.0 661.8L521.8 661.8L522.7 661.8L523.6 661.8L524.4 661.8L525.2 661.5L526.2 651.5L527.3 653.7L528.1 646.2L529.0 645.8L529.8 648.9L530.8 639.6L531.9 638.5L532.8 636.0L533.8 635.7L534.8 633.2L535.8 632.9L536.8 620.0L537.5 621.5L538.5 615.9L539.5 619.2L540.4 609.2L541.4 614.6L542.2 612.6L543.0 606.7L543.8 599.8L544.7 604.6L545.7 599.7L546.6 598.1L547.4 596.0L548.3 587.8L549.2 591.9L550.2 580.3L551.3 578.0L552.0 579.2L552.8 573.7L553.6 571.8L554.4 569.5L555.3 573.7L556.2 568.2L557.2 565.2L558.2 559.7L559.3 561.2L560.2 554.0L561.2 547.1L562.1 550.1L563.0 551.5L563.8 548.3L564.9 553.5L565.7 545.6L566.5 556.5L567.3 547.4L568.3 551.5L569.3 556.4L570.3 551.1L571.2 551.5L572.1 553.2L572.8 550.5L573.7 547.0L574.7 546.5L575.6 552.1L576.5 548.9L577.5 542.9L578.3 548.5L579.2 545.4L580.3 544.4L581.2 544.4L582.2 542.9L583.2 544.8L584.0 541.7L584.9 545.1L586.0 540.7L587.1 551.9L587.9 548.0L588.8 549.8L589.7 550.3L590.6 539.7L591.6 545.2L592.4 539.1L593.4 545.0L594.3 538.9L595.3 538.8L596.3 534.1L597.2 526.1L598.0 523.8L598.8 520.5L599.6 518.0L600.7 511.5L601.6 505.4L602.5 504.5L603.4 498.8L604.2 488.6L604.9 485.8L606.0 481.2L606.8 479.1L607.5 474.7L608.5 473.4L609.3 467.8L610.1 466.9L611.0 459.1L611.9 463.1L612.9 454.1L613.8 462.7L614.6 457.5L615.6 458.8L616.6 450.1L617.7 448.7L618.4 451.8L619.2 447.2L620.2 448.1L621.0 456.3L622.1 448.6L623.0 449.5L624.1 450.4L624.9 449.6L625.8 445.5L626.8 451.7L627.6 445.6L628.6 449.0L629.4 450.0L630.2 444.0L631.2 441.3L632.0 447.6L633.1 441.4L634.0 438.9L635.0 440.3L635.7 436.0L636.6 445.3L637.4 438.5L638.4 442.4L639.4 437.7L640.2 432.7L641.3 431.3L642.2 439.3L643.3 430.0L644.2 429.3L645.3 435.1L646.4 427.6L647.4 438.5L648.3 430.4L649.2 428.0L649.8 432.0L650.2 661.8L650.2 661.8L651.3 661.8L652.2 661.8L653.3 661.8L654.1 661.8L655.2 661.8L656.1 661.8L657.2 661.8L658.2 661.8L659.2 661.8L660.1 661.8L660.9 661.8L661.8 661.8L662.6 661.8L663.5 661.8L664.6 661.8L665.4 661.8L666.2 661.8L667.0 661.8L667.9 661.8L668.9 661.8L669.8 660.2L670.6 650.4L671.6 647.9L672.5 653.2L673.3 647.6L674.3 641.0L675.3 639.3L676.1 639.1L677.0 635.8L677.9 632.8L678.8 635.3L679.8 626.4L680.9 621.8L681.9 616.1L682.7 619.7L683.5 614.6L684.4 612.7L685.5 613.4L686.4 605.3L687.4 604.8L688.2 603.7L689.2 599.2L690.1 597.7L691.1 592.6L692.1 586.8L693.1 588.9L693.9 582.2L695.0 577.5L695.8 575.9L696.8 580.8L697.7 572.4L698.5 568.0L699.3 567.0L700.2 569.3L701.0 563.9L702.0 563.9L703.0 559.7L704.0 558.5L704.8 560.9L705.6 554.0L706.5 560.6L707.5 553.9L708.3 552.8L709.2 555.9L710.2 549.3L711.1 553.0L712.0 555.9L712.9 550.9L713.9 554.2L714.8 556.7L715.8 558.8L716.8 553.3L717.6 551.4L718.6 557.1L719.5 555.9L720.5 553.6L721.4 554.7L722.2 554.8L723.0 549.3L724.0 553.8L724.8 549.7L725.6 551.0L726.6 553.1L727.6 548.8L728.4 552.1L729.3 553.5L730.2 547.5L731.2 547.8L732.2 553.7L733.0 549.7L734.1 548.9L735.1 552.4L736.1 541.8L737.1 545.2L737.9 540.8L738.7 540.1L739.7 542.7L740.6 549.1L741.5 542.8L742.5 544.9L743.5 544.9L744.4 541.8L745.2 532.6L746.2 533.5L747.1 529.7L748.1 521.9L748.9 517.9L750.0 511.6L751.0 504.2L751.9 499.4L752.7 497.4L753.7 491.3L754.5 487.6L755.6 480.0L756.4 479.4L757.2 468.7L758.1 466.9L758.9 464.1L759.9 460.8L760.8 462.5L761.6 459.0L762.7 457.0L763.6 460.9L764.7 453.7L765.5 455.3L766.5 454.7L767.6 451.4L768.4 449.5L769.3 456.7L770.4 458.7L771.2 452.4L772.1 456.5L773.1 451.5L774.1 448.7L775.2 446.9L776.2 445.2L777.2 448.2L778.1 444.3L779.1 450.6L780.0 451.8L780.8 450.2L781.6 454.6L782.4 448.5L783.4 453.1L784.4 451.8L785.3 449.0L786.2 443.3L787.1 446.9L788.1 449.9L789.0 442.1L790.1 438.1L790.9 442.1L791.8 440.7L792.8 447.3L793.7 436.8L794.5 440.2L794.8 442.8L795.2 661.8L795.6 661.8L796.6 661.8L797.4 661.8L798.2 661.8L799.0 661.8L799.9 661.8L800.7 661.8L801.5 661.8L802.5 661.8L803.3 661.8L804.3 661.8L805.2 661.8L806.3 661.8L807.3 661.8L808.3 661.8L809.1 661.8L810.1 661.8L810.9 661.8L812.0 661.8L812.8 661.8L813.7 661.8L814.6 654.5L815.6 651.4L816.6 653.2L817.5 649.6L818.4 640.6L819.5 645.1L820.6 632.6L821.5 631.9L822.5 633.7L823.5 622.1L824.5 619.2L825.3 618.6L826.2 613.4L827.0 614.5L827.8 609.1L828.8 613.8L829.7 609.7L830.7 601.2L831.4 595.2L832.5 596.9L833.5 594.4L834.4 590.8L835.3 584.0L836.1 586.0L837.2 583.3L837.9 573.4L838.7 575.9L839.6 574.6L840.5 571.0L841.3 570.8L842.0 575.9L842.9 573.7L843.7 572.8L844.8 567.9L845.7 566.2L846.7 571.3L847.6 565.8L848.6 565.4L849.6 562.9L850.4 565.7L851.5 567.0L852.6 571.8L853.6 569.4L854.6 567.1L855.5 568.8L856.3 561.1L857.3 563.6L858.1 567.3L859.2 568.0L860.1 561.7L861.1 563.0L862.2 559.9L863.0 563.8L863.9 560.4L864.9 565.1L865.9 562.7L866.6 564.1L867.5 564.9L868.5 555.0L869.6 558.9L870.6 560.2L871.6 555.0L872.3 561.1L873.2 561.0L874.1 564.1L875.1 552.9L875.9 561.9L876.8 554.2L877.6 554.2L878.4 556.0L879.4 554.7L880.2 551.0L881.3 556.3L882.3 554.5L883.1 556.6L884.2 555.4L884.9 558.7L885.8 553.1L886.7 551.3L887.6 543.5L888.5 541.9L889.3 539.0L890.1 537.8L891.0 532.6L891.9 522.5L892.8 515.1L893.7 514.9L894.7 505.4L895.8 493.8L896.7 493.7L897.6 486.1L898.4 484.3L899.3 474.7L900.3 468.6L901.4 463.8L902.3 462.0L903.1 457.5L904.1 463.3L905.0 462.5L906.0 459.9L907.0 453.0L908.1 459.2L908.9 451.6L910.0 460.4L910.9 452.4L911.9 458.2L912.8 449.2L913.6 457.4L914.6 448.9L915.6 453.8L916.7 447.0L917.5 455.9L918.4 448.5L919.2 451.0L920.2 454.8L921.2 450.2L922.3 449.9L923.2 444.5L924.2 453.5L925.3 449.8L926.4 442.2L927.3 448.7L928.1 450.0L928.9 451.0L929.9 452.0L930.9 444.7L931.9 444.6L933.0 447.7L933.8 443.5L934.6 438.0L935.7 441.3L936.7 446.4L937.6 444.2L938.5 444.0L939.4 440.0L939.3 441.2L939.7 661.8L940.2 661.8L941.0 661.8L942.1 661.8L943.0 661.8L944.0 661.8L944.8 661.8L945.8 661.8L946.8 661.8L947.9 661.8L948.8 661.8L949.7 661.8L950.7 661.8L951.4 661.8L952.4 661.8L953.3 661.8L954.3 661.8L955.1 661.8L956.1 661.8L956.9 661.8L957.6 661.8L958.5 657.6L959.4 658.0L960.4 649.7L961.2 649.9L962.2 645.4L963.1 645.7L964.1 644.6L965.1 637.5L966.1 638.0L967.1 635.0L967.9 629.5L968.9 624.5L970.0 625.8L970.9 619.3L971.7 611.9L972.5 616.1L973.3 609.5L974.3 610.5L975.3 602.6L976.2 596.6L977.2 599.6L978.3 598.0L979.1 592.0L980.2 589.6L981.1 587.6L982.1 584.3L983.2 579.1L984.1 570.3L985.0 571.1L986.0 567.3L986.8 563.5L987.7 565.7L988.5 558.5L989.4 553.2L990.2 553.7L991.1 555.1L992.2 554.8L993.1 552.9L993.9 549.8L994.8 559.4L995.7 548.2L996.8 554.0L997.7 547.5L998.5 558.3L999.3 552.5L1000.3 556.9L1001.2 548.6L1002.1 554.9L1003.1 551.4L1004.1 550.4L1005.1 549.7L1006.2 545.6L1007.2 549.1L1008.1 550.1L1008.9 543.7L1010.0 544.7L1011.0 546.8L1012.1 547.3L1013.2 551.6L1014.1 545.4L1015.1 545.6L1016.1 546.9L1017.1 541.4L1018.1 550.4L1019.1 550.3L1019.9 548.5L1020.9 547.5L1021.9 548.2L1022.8 540.4L1023.8 547.5L1024.8 543.2L1025.8 546.6L1026.5 546.3L1027.6 540.9L1028.6 544.9L1029.5 534.9L1030.4 533.1L1031.4 526.9L1032.4 525.0L1033.2 519.1L1034.1 515.3L1035.1 506.1L1036.1 506.9L1036.9 499.3L1037.8 490.3L1038.6 486.0L1039.5 482.3L1040.5 475.2L1041.6 471.4L1042.7 461.7L1043.6 462.3L1044.6 452.6L1045.4 450.8L1046.4 456.4L1047.4 452.6L1048.3 446.0L1049.4 443.9L1050.3 443.3L1051.1 446.3L1052.0 441.6L1053.0 443.4L1054.0 446.5L1054.9 448.9L1055.8 447.0L1056.8 447.1L1057.9 440.4L1058.8 445.8L1059.7 439.5L1060.5 433.7L1061.4 439.9L1062.2 440.1L1063.0 433.5L1063.8 439.1L1064.8 437.0L1065.6 436.3L1066.4 438.0L1067.3 431.6L1068.2 435.4L1069.2 436.5L1070.1 436.9L1071.1 431.9L1072.1 427.1L1073.1 424.9L1073.9 424.8L1074.9 431.6L1075.8 424.1L1076.8 424.8L1077.7 432.9L1078.5 425.4L1079.5 432.4L1080.3 420.3L1081.1 431.7L1082.1 430.4L1083.1 424.3L1083.8 420.9L1084.2 661.8L1084.0 661.8L1084.8 661.8L1085.7 661.8L1086.7 661.8L1087.7 661.8L1088.6 661.8L1089.4 661.8L1090.4 661.8L1091.5 661.8L1092.6 661.8L1093.6 661.8L1094.7 661.8L1095.5 661.8L1096.3 661.8L1097.3 661.8L1098.2 661.8L1099.1 661.8L1100.0 661.8L1101.1 661.8L1102.0 661.8L1102.8 661.8L1103.6 656.5L1104.7 661.0L1105.7 655.0L1106.7 649.6L1107.8 646.9L1108.6 643.7L1109.6 641.7L1110.6 637.9L1111.5 635.9L1112.4 631.6L1113.4 627.1L1114.5 628.0L1115.3 620.8L1116.2 623.9L1117.3 619.1L1118.3 606.9L1119.1 611.5L1120.0 605.8L1121.1 606.3L1121.9 595.7L1122.7 595.2L1123.8 598.9L1124.5 588.4L1125.6 585.5L1126.5 588.7L1127.4 585.5L1128.3 583.4L1129.2 575.7L1130.1 575.5L1130.8 574.9L1131.6 562.3L1132.4 562.5L1133.3 560.8L1134.2 555.7L1135.2 562.3L1136.1 555.8L1136.9 556.0L1137.9 559.4L1138.8 558.7L1139.6 562.6L1140.5 562.6L1141.2 556.4L1142.1 555.7L1143.0 553.0L1143.9 557.9L1144.8 554.2L1145.6 556.8L1146.5 555.6L1147.3 556.3L1148.4 561.2L1149.5 550.4L1150.4 560.7L1151.3 549.8L1152.1 552.0L1153.1 559.3L1154.0 558.6L1154.8 553.8L1155.7 551.8L1156.6 556.7L1157.7 559.0L1158.7 555.3L1159.8 551.0L1160.7 555.4L1161.8 547.3L1162.8 550.1L1163.9 546.0L1164.9 552.4L1165.9 552.0L1166.9 549.1L1167.9 544.6L1169.0 552.6L1169.8 553.7L1170.7 552.5L1171.5 544.5L1172.3 542.7L1173.4 544.1L1174.2 549.6L1175.2 545.3L1176.2 548.9L1177.0 539.9L1177.8 536.6L1178.6 532.7L1179.5 531.8L1180.5 524.9L1181.4 523.3L1182.5 519.3L1183.3 509.2L1184.4 503.3L1185.2 502.1L1186.0 493.3L1186.8 494.1L1187.6 487.3L1188.7 484.2L1189.5 477.9L1190.5 471.9L1191.3 465.2L1192.4 464.8L1193.1 459.7L1194.2 458.9L1195.0 451.8L1196.0 451.9L1196.8 449.9L1197.6 455.3L1198.3 443.8L1199.1 449.1L1200.2 451.8L1201.1 443.7L1202.0 450.6L1202.9 439.9L1204.0 439.6L1204.7 450.5L1205.7 450.5L1206.7 446.3L1207.7 438.4L1208.6 439.2L1209.4 442.8L1210.4 441.9L1211.2 436.5L1212.1 435.3L1212.9 435.9L1213.7 437.3L1214.8 437.3L1215.7 432.4L1216.8 433.7L1217.6 442.5L1218.6 441.4L1219.4 435.7L1220.5 438.7L1221.5 429.4L1222.6 439.9L1223.4 428.5L1224.5 437.7L1225.3 430.5L1226.1 437.7L1226.9 431.3L1227.7 427.6L1228.3 428.4L1228.7 661.8L1228.5 661.8L1229.6 661.8L1230.4 661.8L1231.4 661.8L1232.4 661.8L1233.2 661.8L1234.3 661.8L1235.2 661.8L1236.1 661.8L1237.1 661.8L1237.9 661.8L1238.7 661.8L1239.5 661.8L1240.5 661.8L1241.3 661.8L1242.3 661.8L1243.3 661.8L1244.4 661.8L1245.3 661.8L1246.2 661.8L1247.2 660.8L1248.0 655.6L1249.0 654.5L1249.9 654.8L1250.8 644.4L1251.7 640.2L1252.5 642.3L1253.6 634.2L1254.6 635.8L1255.5 635.8L1256.5 625.4L1257.3 627.9L1258.0 623.9L1259.0 615.1L1260.0 612.6L1260.8 614.8L1261.8 615.2L1262.7 606.2L1263.5 608.1L1264.5 605.1L1265.5 599.0L1266.4 591.3L1267.2 588.2L1268.3 588.1L1269.1 587.8L1270.2 584.8L1271.1 582.3L1272.1 573.8L1273.2 571.1L1274.0 566.4L1274.9 561.6L1275.9 566.9L1276.8 563.8L1277.8 562.6L1278.8 563.4L1279.6 559.3L1280.6 567.4L1281.5 558.8L1282.5 567.3L1283.5 559.6L1284.4 559.8L1285.4 560.9L1286.5 561.0L1287.2 559.3L1288.3 555.9L1289.3 555.3L1290.3 560.6L1291.1 564.1L1291.9 554.7L1292.9 554.6L1293.9 559.7L1294.9 564.6L1295.7 559.8L1296.4 560.6L1297.4 562.2L1298.2 562.8L1299.1 553.5L1300.0 554.8L1301.0 553.3L1302.0 556.7L1302.8 560.4L1303.7 558.1L1304.6 555.9L1305.5 559.6L1306.5 549.3L1307.5 559.3L1308.5 551.1L1309.4 552.8L1310.5 554.3L1311.4 557.7L1312.5 552.6L1313.3 551.7L1314.3 553.5L1315.2 550.0L1316.3 546.7L1317.2 552.1L1318.0 553.5L1319.0 549.4L1319.9 541.5L1320.8 536.0L1321.7 538.8" stroke="#0f6b99" stroke-width="1.1"/><path d="M466.0 477.4L467.0 469.4L467.8 465.8L468.9 457.8L469.7 455.8L470.7 452.8L471.7 448.4L472.7 442.2L473.6 446.8L474.5 443.5L475.3 441.4L476.3 442.8L477.3 435.6L478.3 438.0L479.0 445.2L480.1 441.5L481.0 433.2L482.0 442.2L482.8 440.1L483.7 442.4L484.6 438.0L485.5 438.9L486.3 440.3L487.3 430.6L488.3 437.8L489.1 437.3L490.0 437.6L490.8 435.2L491.6 429.0L492.5 430.7L493.4 429.3L494.4 431.5L495.2 428.9L496.1 424.5L496.9 422.9L497.6 426.6L498.5 428.9L499.6 423.4L500.4 425.5L501.4 430.7L502.2 423.1L503.2 424.2L504.1 423.1L504.9 418.0L506.0 422.3L505.8 422.2L506.2 661.8L506.7 661.8L507.8 661.8L508.6 661.8L509.4 661.8L510.2 661.8L511.2 661.8L512.2 661.8L513.1 661.8L514.0 661.8L515.0 661.8L516.1 661.8L517.2 661.8L518.1 661.8L519.1 661.8L520.2 661.8L521.2 661.8L522.2 661.8L523.2 661.8L524.1 661.8L525.2 658.4L526.2 659.6L527.0 656.8L527.9 650.7L528.7 652.2L529.8 650.2L530.9 639.6L531.8 634.4L532.8 641.7L533.9 634.2L535.0 626.8L535.8 632.4L536.5 622.4L537.6 625.1L538.3 621.2L539.4 614.2L540.4 608.6L541.4 606.9L542.2 613.3L543.3 603.7L544.1 606.2L545.0 601.4L545.9 597.4L546.7 598.8L547.5 595.8L548.3 590.5L549.1 584.0L550.1 584.7L551.0 584.1L551.8 583.5L552.7 577.9L553.5 575.9L554.6 575.9L555.5 569.2L556.3 563.0L557.1 567.7L557.9 555.4L558.8 561.8L559.9 553.0L561.0 554.3L562.0 557.5L562.9 548.1L563.8 547.9L564.7 546.5L565.4 549.3L566.3 554.2L567.3 551.1L568.4 552.5L569.4 544.7L570.3 552.5L571.3 543.5L572.3 549.3L573.2 553.2L574.3 552.1L575.1 553.3L575.9 548.9L576.8 551.1L577.7 543.8L578.5 551.0L579.4 541.5L580.5 545.2L581.3 541.2L582.4 540.6L583.3 546.5L584.3 541.3L585.4 544.5L586.3 546.4L587.2 543.3L588.1 544.0L589.1 546.4L590.0 545.3L591.0 545.0L592.1 537.5L593.1 535.6L593.9 535.7L595.0 533.2L595.9 523.6L597.0 522.7L597.8 521.2L598.7 512.1L599.5 505.0L600.5 501.1L601.5 497.5L602.5 491.7L603.4 488.9L604.4 476.8L605.2 474.3L605.9 473.0L606.8 465.0L607.7 464.5L608.6 463.4L609.4 462.4L610.2 456.4L611.2 453.2L612.0 448.5L612.8 454.9L613.7 457.4L614.7 449.9L615.5 456.1L616.6 452.9L617.4 453.3L618.3 449.1L619.1 448.5L619.9 448.7L620.9 450.8L621.9 442.6L622.9 448.5L623.7 445.3L624.6 450.6L625.5 449.6L626.5 442.0L627.2 443.2L628.0 446.4L629.0 438.0L629.9 440.1L630.8 437.3L631.6 440.3L632.4 441.2L633.4 436.2L634.4 440.2L635.3 438.7L636.3 438.5L637.3 436.2L638.3 437.2L639.4 435.2L640.3 433.9L641.2 433.1L642.2 431.7L643.3 433.8L644.2 438.4L645.2 430.3L646.1 438.4L647.1 429.1L647.9 438.4L648.7 432.8L649.7 436.1L649.8 434.8L650.2 661.8L650.8 661.8L651.6 661.8L652.5 661.8L653.5 661.8L654.5 661.8L655.4 661.8L656.3 661.8L657.2 661.8L658.1 661.8L658.9 661.8L659.7 661.8L660.6 661.8L661.6 661.8L662.4 661.8L663.2 661.8L664.3 661.8L665.3 661.8L666.2 661.8L667.2 661.8L668.2 661.8L669.2 658.3L670.2 660.2L671.1 654.4L671.9 652.1L673.0 650.4L673.8 646.8L674.6 647.6L675.7 638.9L676.4 636.8L677.2 634.8L678.3 626.3L679.2 625.7L680.1 630.2L681.0 619.9L682.1 617.7L683.1 618.0L684.1 610.4L685.2 606.6L686.3 608.9L687.2 603.3L687.9 604.2L688.8 602.6L689.6 595.4L690.5 599.0L691.5 586.6L692.4 586.8L693.1 589.3L693.9 582.5L694.9 577.7L695.9 575.4L696.9 574.0L697.8 575.9L698.8 565.8L699.8 561.5L700.8 564.1L701.6 561.4L702.7 553.3L703.5 561.4L704.4 550.2L705.4 550.7L706.2 558.0L707.2 554.8L708.1 548.3L708.8 553.7L709.9 550.7L711.0 555.5L711.9 546.7L712.7 553.0L713.8 555.8L714.8 548.4L715.7 545.2L716.7 555.2L717.8 545.7L718.7 555.7L719.7 548.6L720.7 554.3L721.6 545.2L722.6 552.5L723.5 548.8L724.4 542.0L725.5 553.6L726.5 551.6L727.5 546.5L728.6 541.5L729.7 550.1L730.4 542.5L731.3 542.1L732.2 546.2L733.3 546.4L734.2 545.7L735.2 549.2L736.1 542.8L737.1 538.6L737.9 537.5L738.9 544.1L739.9 544.0L740.9 547.8L741.9 541.2L742.7 541.0L743.6 536.1L744.6 530.4L745.7 525.7L746.5 515.2L747.6 509.0L748.4 511.3L749.4 502.7L750.2 499.7L751.0 492.2L752.0 480.3L752.8 476.9L753.8 470.6L754.9 464.1L755.7 461.6L756.7 460.0L757.4 453.8L758.4 450.7L759.4 447.8L760.2 444.3L761.3 450.6L762.3 442.3L763.2 449.1L764.2 442.6L765.1 442.9L766.1 446.1L767.2 448.2L768.2 438.7L769.1 444.9L769.9 443.3L770.8 442.0L771.6 439.1L772.5 442.6L773.4 433.8L774.2 442.4L775.2 436.6L776.0 431.1L776.9 434.8L777.7 431.8L778.6 433.6L779.6 432.0L780.5 436.4L781.4 433.0L782.4 438.0L783.2 438.3L784.2 435.5L785.2 431.3L786.3 428.3L787.4 434.3L788.4 430.1L789.2 423.6L790.0 425.6L790.8 427.8L791.7 427.1L792.7 428.5L793.8 429.4L794.9 427.1L794.8 421.4L795.2 661.8L795.9 661.8L796.9 661.8L797.9 661.8L798.7 661.8L799.8 661.8L800.5 661.8L801.5 661.8L802.6 661.8L803.6 661.8L804.6 661.8L805.5 661.8L806.6 661.8L807.5 661.8L808.5 661.8L809.6 661.8L810.4 661.8L811.3 661.8L812.2 661.8L813.0 661.8L814.1 655.5L815.1 660.6L816.1 647.8L817.1 644.4L818.2 643.0L819.2 643.8L820.2 640.2L821.0 637.1L821.9 637.3L822.7 632.0L823.5 631.9L824.5 620.0L825.4 618.2L826.5 621.8L827.4 612.7L828.2 606.6L829.2 606.9L830.2 600.6L831.0 597.5L831.9 600.3L832.7 595.0L833.5 589.3L834.4 585.5L835.5 582.9L836.3 585.9L837.2 575.3L838.2 578.1L839.2 573.5L840.2 570.3L841.3 564.9L842.1 561.9L843.0 563.9L843.9 559.7L845.0 556.5L845.9 559.0L846.8 550.9L847.7 550.3L848.6 550.5L849.5 546.4L850.5 556.8L851.5 554.7L852.4 548.5L853.5 553.8L854.3 549.3L855.3 549.5L856.3 542.7L857.1 549.5L858.1 544.1L859.2 549.4L860.0 545.1L861.1 543.0L862.0 550.7L863.0 548.7L863.8 551.5L864.6 546.6L865.6 545.4L866.5 542.7L867.3 540.4L868.3 539.8L869.2 542.7L870.3 540.8L871.1 538.0L871.9 544.7L873.0 542.1L873.8 536.4L874.7 546.6L875.6 542.3L876.5 537.4L877.3 544.8L878.3 538.4L879.3 534.3L880.3 534.3L881.1 540.5L882.0 538.1L882.9 541.0L883.9 531.7L884.9 539.8L885.8 531.4L886.6 525.1L887.6 523.6L888.5 517.6L889.4 512.6L890.4 508.4L891.3 504.6L892.2 496.3L893.1 491.1L894.1 481.6L895.0 474.9L896.0 470.2L896.8 462.0L897.8 462.1L898.6 457.0L899.7 453.8L900.5 451.7L901.4 448.5L902.3 450.8L903.4 445.5L904.2 448.1L905.0 441.7L905.9 441.9L906.7 450.2L907.5 448.4L908.4 447.1L909.3 450.1L910.3 442.3L911.1 448.8L911.9 447.8L912.8 441.8L913.9 438.7L914.7 445.4L915.5 447.3L916.3 441.0L917.3 434.9L918.1 443.7L919.0 435.6L919.8 440.5L920.8 435.7L921.6 438.6L922.6 443.0L923.7 435.6L924.6 439.5L925.3 431.9L926.2 435.5L927.1 434.8L928.2 438.5L929.2 438.8L930.2 431.5L931.1 431.4L932.1 439.9L932.9 437.1L933.9 428.8L934.7 427.3L935.5 433.1L936.6 434.5L937.6 437.0L938.5 426.6L939.5 435.2L939.3 429.7L939.7 661.8L940.4 661.8L941.1 661.8L942.2 661.8L943.0 661.8L944.0 661.8L945.0 661.8L946.0 661.8L946.9 661.8L947.7 661.8L948.7 661.8L949.7 661.8L950.5 661.8L951.4 661.8L952.4 661.8L953.5 661.8L954.5 661.8L955.6 661.8L956.6 661.8L957.5 661.8L958.5 661.8L959.6 661.8L960.3 659.5L961.2 648.5L962.3 646.8L963.2 647.2L964.1 643.7L965.0 637.2L965.8 631.5L966.6 629.4L967.3 635.9L968.4 628.7L969.3 621.0L970.1 620.0L971.1 617.7L971.9 618.6L972.9 614.4L973.9 606.3L975.0 602.8L975.9 597.9L976.9 600.4L977.7 594.0L978.6 589.9L979.5 583.6L980.4 586.2L981.2 585.9L982.1 577.7L983.0 573.3L983.9 570.0L984.9 568.1L986.0 568.5L986.9 564.4L987.8 555.1L988.6 552.2L989.6 556.0L990.5 553.0L991.5 546.3L992.4 551.3L993.4 552.7L994.2 551.8L995.2 546.5L996.0 548.0L997.0 547.6L998.1 551.0L998.9 549.5L999.6 543.7L1000.5 545.6L1001.5 546.8L1002.4 543.3L1003.4 540.3L1004.4 546.2L1005.3 539.9L1006.2 550.8L1007.1 540.2L1007.9 546.1L1008.9 542.2L1009.7 540.3L1010.8 540.4L1011.8 546.8L1012.7 543.1L1013.6 542.5L1014.7 538.2L1015.5 538.4L1016.4 543.3L1017.3 544.3L1018.2 536.6L1019.1 541.4L1019.9 533.0L1020.8 539.0L1021.6 538.1L1022.6 533.0L1023.6 531.9L1024.4 534.4L1025.3 539.1L1026.2 539.4L1027.2 539.5L1028.2 532.3L1028.9 533.0L1029.9 527.2L1030.9 528.2L1031.9 522.2L1032.6 512.9L1033.5 512.3L1034.3 505.9L1035.3 502.7L1036.2 493.3L1037.3 486.8L1038.1 480.4L1038.9 479.9L1040.0 469.9L1040.8 468.2L1041.6 462.6L1042.5 454.4L1043.4 455.7L1044.4 453.9L1045.3 452.5L1046.1 452.0L1047.1 454.9L1048.1 443.6L1049.1 448.9L1050.1 444.9L1051.0 453.4L1052.0 447.1L1052.9 452.2L1053.7 442.5L1054.7 449.2L1055.7 440.8L1056.5 442.4L1057.4 444.9L1058.2 442.5L1059.0 436.7L1059.8 435.9L1060.5 442.8L1061.4 435.0L1062.3 434.4L1063.1 445.1L1064.0 445.3L1064.9 443.5L1065.8 443.4L1066.6 432.2L1067.6 436.3L1068.6 438.3L1069.6 443.0L1070.5 432.2L1071.4 440.8L1072.5 431.9L1073.3 439.9L1074.2 434.9L1075.1 429.7L1076.0 429.8L1076.9 427.8L1077.9 432.8L1078.8 427.9L1079.8 431.2L1080.6 426.7L1081.6 424.9L1082.5 434.3L1083.3 432.3L1083.8 430.9L1084.2 661.8L1084.2 661.8L1085.2 661.8L1086.0 661.8L1087.1 661.8L1087.9 661.8L1088.7 661.8L1089.5 661.8L1090.5 661.8L1091.6 661.8L1092.6 661.8L1093.4 661.8L1094.4 661.8L1095.4 661.8L1096.3 661.8L1097.3 661.8L1098.4 661.8L1099.2 661.8L1100.1 661.8L1100.9 661.8L1101.7 661.8L1102.5 661.8L1103.5 661.7L1104.5 654.0L1105.3 659.6L1106.1 648.7L1107.0 655.5L1107.8 649.6L1108.8 648.1L1109.9 643.6L1111.0 637.8L1111.8 638.2L1112.7 634.6L1113.6 626.1L1114.4 630.1L1115.4 621.4L1116.5 623.7L1117.3 615.7L1118.3 612.2L1119.1 611.7L1120.1 606.4L1120.9 608.0L1122.0 606.4L1122.8 601.6L1123.6 604.6L1124.7 598.2L1125.8 590.0L1126.6 595.0L1127.6 592.6L1128.4 591.1L1129.4 579.5L1130.5 581.7L1131.3 577.7L1132.1 578.8L1133.1 567.4L1134.0 572.8L1135.0 562.8L1135.9 563.9L1136.9 559.0L1137.8 560.5L1138.7 556.3L1139.8 558.3L1140.5 553.6L1141.6 548.4L1142.4 547.3L1143.5 555.7L1144.3 556.0L1145.3 551.3L1146.1 551.6L1147.0 555.3L1148.0 555.2L1148.9 553.9L1149.7 548.9L1150.7 549.0L1151.5 552.8L1152.6 547.6L1153.4 549.3L1154.2 546.6L1155.0 543.8L1155.8 548.6L1156.9 551.6L1157.8 544.3L1158.7 541.4L1159.8 545.4L1160.8 547.6L1161.8 539.9L1162.6 540.3L1163.4 547.7L1164.2 545.5L1165.3 537.9L1166.2 543.5L1167.1 544.8L1167.9 541.5L1168.8 536.8L1169.9 535.4L1170.8 536.6L1171.8 537.2L1172.8 543.4L1173.6 541.6L1174.5 538.4L1175.2 534.5L1176.2 533.8L1177.3 530.1L1178.1 520.0L1179.0 522.2L1179.7 516.5L1180.7 510.9L1181.6 502.6L1182.6 493.6L1183.6 494.6L1184.7 482.1L1185.7 474.2L1186.7 472.6L1187.6 463.5L1188.6 456.9L1189.5 452.4L1190.3 450.8L1191.3 445.3L1192.2 441.8L1193.1 439.6L1194.0 435.2L1194.8 436.6L1195.7 435.9L1196.8 436.2L1197.7 433.6L1198.5 432.5L1199.6 426.5L1200.4 427.6L1201.4 430.9L1202.2 433.3L1203.1 434.5L1204.1 424.5L1205.2 434.1L1206.0 422.5L1207.0 430.9L1208.0 426.2L1209.0 422.1L1209.8 429.2L1210.8 420.2L1211.8 424.1L1212.7 431.1L1213.7 424.2L1214.6 429.4L1215.5 419.8L1216.5 419.4L1217.6 420.7L1218.4 426.1L1219.4 422.2L1220.2 415.9L1221.0 425.1L1221.8 420.7L1222.8 423.9L1223.6 417.3L1224.7 419.7L1225.8 417.8L1226.7 421.6L1227.5 419.9L1228.3 416.3L1228.7 661.8L1228.6 661.8L1229.6 661.8L1230.7 661.8L1231.7 661.8L1232.6 661.8L1233.4 661.8L1234.1 661.8L1235.1 661.8L1235.9 661.8L1236.9 661.8L1238.0 661.8L1238.8 661.8L1239.8 661.8L1240.7 661.8L1241.6 661.8L1242.7 661.8L1243.4 661.8L1244.3 661.8L1245.1 661.8L1246.1 661.8L1247.2 660.6L1248.0 654.0L1248.9 653.4L1249.9 648.1L1250.9 646.4L1251.8 644.0L1252.7 639.1L1253.8 642.7L1254.7 633.2L1255.7 630.7L1256.6 631.1L1257.6 629.8L1258.4 618.9L1259.3 618.0L1260.2 620.8L1261.2 616.8L1262.1 608.8L1263.0 608.4L1264.0 602.7L1264.8 602.5L1265.7 596.4L1266.6 594.3L1267.5 595.9L1268.3 585.8L1269.3 587.6L1270.2 585.4L1270.9 582.2L1271.8 578.0L1272.6 571.3L1273.5 576.3L1274.5 572.0L1275.5 565.2L1276.4 562.9L1277.4 560.0L1278.2 554.7L1279.2 558.0L1280.2 551.8L1281.0 550.0L1281.8 553.9L1282.7 550.2L1283.6 554.4L1284.5 549.7L1285.4 556.0L1286.1 548.0L1287.2 548.5L1288.3 552.7L1289.3 550.0L1290.2 553.0L1291.1 553.1L1291.9 552.6L1293.0 555.7L1293.9 546.9L1294.9 555.3L1295.9 551.6L1296.9 548.0L1298.0 543.7L1299.0 552.6L1299.8 550.7L1300.6 550.9L1301.4 541.9L1302.4 542.8L1303.5 542.7L1304.5 548.4L1305.4 547.4L1306.4 548.5L1307.3 542.3L1308.1 543.7L1308.9 548.2L1309.9 542.8L1310.9 542.7L1312.0 540.7L1312.8 538.3L1313.6 540.9L1314.5 546.7L1315.4 539.3L1316.4 537.8L1317.5 534.5L1318.5 524.2L1319.5 523.7L1320.4 520.7L1321.4 508.6" stroke="#c6005f" stroke-width="1.1"/><path d="M466.0 638.3L467.2 633.3L468.5 630.1L469.7 632.8L470.8 622.0L472.0 619.4L472.9 621.1L473.9 618.2L475.1 620.9L476.0 616.3L477.3 609.1L478.3 607.0L479.2 607.2L480.2 612.1L481.4 608.1L482.4 598.3L483.7 604.3L485.0 600.0L486.1 602.6L487.4 595.8L488.7 592.3L489.7 598.0L490.7 600.0L491.6 597.7L492.7 601.0L493.9 596.4L494.9 589.8L496.0 596.3L497.1 591.0L497.5 593.7L497.8 143.5L516.0 143.5L516.3 661.8L533.3 661.8L533.3 658.6L534.2 656.3L535.4 656.5L536.7 649.4L537.8 647.9L538.7 643.3L540.0 638.8L541.2 628.9L542.5 629.6L543.5 624.9L544.7 625.0L545.9 615.5L547.2 619.1L548.4 615.5L549.5 608.1L550.8 607.8L552.0 603.1L553.0 603.4L554.0 604.0L555.0 595.9L556.3 599.4L557.2 589.0L558.3 593.8L559.3 590.4L560.5 590.4L561.6 594.0L562.9 593.1L564.0 582.5L564.9 583.0L566.2 583.4L567.4 589.4L568.5 588.5L569.7 586.3L570.8 576.8L572.0 576.9L572.5 583.3L572.8 143.5L590.0 143.5L590.3 661.8L607.3 661.8L607.3 661.8L608.5 657.7L609.5 654.8L610.5 651.8L611.8 643.2L612.9 643.2L613.9 643.3L615.0 634.9L616.2 634.9L617.4 628.1L618.6 626.1L619.8 625.9L621.0 623.9L622.1 617.0L623.3 619.1L624.5 613.1L625.7 617.4L626.8 613.2L628.0 609.1L629.2 605.3L630.4 606.8L631.6 601.1L632.8 604.0L634.0 596.7L635.2 594.3L636.5 598.6L637.6 602.1L638.8 591.8L639.9 594.3L641.1 593.2L642.1 592.2L643.2 593.4L644.3 593.8L645.5 593.5L645.8 595.3L646.1 143.5L664.3 143.5L664.6 661.8L681.6 661.8L681.6 661.8L682.6 658.5L683.7 655.7L684.9 648.5L685.8 646.4L686.8 646.2L687.8 641.1L688.7 639.0L689.6 634.0L690.7 629.6L691.8 629.5L693.1 628.2L694.2 623.0L695.2 621.9L696.5 616.6L697.4 612.2L698.3 610.8L699.3 608.3L700.6 603.4L701.7 601.4L702.9 604.0L703.8 600.1L704.9 594.4L706.2 596.4L707.3 591.9L708.2 599.7L709.3 592.7L710.2 591.6L711.5 593.5L712.6 594.6L713.6 584.7L714.6 584.2L715.9 588.2L716.9 582.8L718.0 589.9L719.0 582.2L720.1 591.4L720.5 588.5L720.8 143.5L738.3 143.5L738.6 661.8L755.6 661.8L755.6 661.8L756.7 657.4L757.8 650.8L759.0 651.7L760.1 645.6L761.4 637.0L762.4 637.6L763.3 628.5L764.4 628.3L765.5 624.6L766.6 620.3L767.5 617.4L768.6 616.6L769.6 616.1L770.7 611.8L771.8 606.6L772.9 611.0L773.9 604.8L775.2 597.8L776.3 604.9L777.5 598.5L778.6 593.6L779.8 594.5L781.0 593.9L782.1 587.3L783.1 592.7L784.3 594.3L785.5 585.8L786.6 590.0L787.8 581.5L788.8 586.5L789.9 585.9L790.9 590.2L792.1 581.3L793.1 585.4L793.4 143.5L812.3 143.5L812.6 661.8L829.6 661.8L829.6 661.8L830.8 655.2L832.0 656.6L833.2 645.5L834.5 643.2L835.4 639.2L836.4 637.6L837.7 633.2L838.6 634.0L839.9 631.8L841.0 626.6L842.0 622.3L842.9 624.8L844.0 622.8L844.9 616.0L846.1 610.6L847.0 613.0L848.1 609.4L849.2 604.0L850.2 611.3L851.4 608.6L852.5 603.1L853.8 600.9L855.0 602.7L856.1 601.7L857.3 597.4L858.2 599.9L859.3 593.1L860.3 592.7L861.4 599.7L862.6 599.1L863.5 592.3L864.5 588.3L865.6 595.3L866.8 599.1L868.1 592.7L868.4 143.5L886.0 143.5L886.3 661.8L903.3 661.8L903.3 661.8L904.3 655.4L905.4 656.6L906.4 648.1L907.5 645.6L908.5 644.1L909.5 644.2L910.6 638.2L911.6 637.3L912.6 631.1L913.7 628.3L914.8 625.2L915.9 624.9L917.0 621.1L918.1 624.8L919.0 622.0L919.9 613.6L921.0 612.8L921.9 614.1L923.2 610.5L924.2 610.4L925.2 612.4L926.1 608.7L927.2 601.9L928.2 607.6L929.2 607.6L930.2 605.8L931.3 607.1L932.6 602.2L933.8 597.5L935.0 599.3L936.3 603.1L937.4 600.5L938.6 594.5L939.6 601.1L940.5 600.6L941.4 598.3L942.5 596.9L942.8 143.5L960.0 143.5L960.3 661.8L977.3 661.8L977.3 661.8L978.3 657.9L979.3 652.1L980.5 651.7L981.5 644.3L982.8 640.0L983.9 633.7L984.8 638.1L986.0 631.4L986.9 627.5L988.2 623.9L989.2 624.8L990.2 615.1L991.3 611.8L992.2 615.9L993.1 612.3L994.0 611.6L995.1 608.8L996.0 609.7L997.3 605.8L998.4 601.5L999.5 603.0L1000.5 601.2L1001.7 590.7L1002.8 589.7L1003.8 598.0L1004.9 591.3L1006.0 591.5L1007.2 586.3L1008.4 590.2L1009.5 583.1L1010.5 591.4L1011.5 591.3L1012.7 581.4L1013.8 590.1L1014.7 588.4L1015.6 585.9L1016.8 584.8L1017.1 143.5L1034.3 143.5L1034.6 661.8L1051.6 661.8L1051.6 661.8L1052.5 657.0L1053.4 657.2L1054.5 652.5L1055.4 649.0L1056.4 643.1L1057.5 638.4L1058.7 635.9L1059.8 635.3L1061.1 630.1L1062.3 626.0L1063.5 627.1L1064.8 623.2L1065.7 624.1L1066.7 620.2L1067.8 617.6L1068.8 611.1L1069.9 616.5L1070.8 613.9L1071.9 604.6L1073.1 605.3L1074.1 605.9L1075.2 605.7L1076.1 601.7L1077.3 598.8L1078.2 600.1L1079.2 597.1L1080.3 593.5L1081.5 602.6L1082.5 592.2L1083.6 597.7L1084.7 593.0L1086.0 595.7L1087.3 594.6L1088.5 595.8L1088.8 143.5L1107.3 143.5L1107.6 661.8L1124.6 661.8L1124.6 659.7L1125.7 661.1L1127.0 656.8L1128.1 649.8L1129.3 646.4L1130.3 644.3L1131.3 639.1L1132.4 634.5L1133.3 634.9L1134.3 626.9L1135.6 624.7L1136.7 625.7L1137.7 619.5L1138.8 624.2L1139.8 621.5L1140.9 611.5L1141.9 610.4L1142.9 609.5L1144.2 607.8L1145.4 608.3L1146.3 605.4L1147.5 607.2L1148.5 604.3L1149.4 603.2L1150.5 600.1L1151.7 599.7L1152.9 593.5L1154.2 593.8L1155.4 594.7L1156.6 595.9L1157.7 591.3L1158.9 595.7L1159.8 597.9L1160.8 591.2L1162.0 589.1L1163.1 586.1L1164.1 588.8L1164.8 591.7L1165.1 143.5L1181.3 143.5L1181.6 661.8L1198.6 661.8L1198.6 660.1L1199.8 654.3L1201.0 651.7L1202.3 647.1L1203.4 647.4L1204.5 638.5L1205.5 634.8L1206.6 636.2L1207.5 633.7L1208.5 628.8L1209.8 623.2L1210.9 624.9L1211.8 619.9L1213.0 617.1L1214.0 613.1L1215.0 616.6L1216.0 611.6L1217.3 613.8L1218.4 605.7L1219.4 611.4L1220.5 601.5L1221.8 600.8L1222.9 602.7L1224.0 596.0L1225.0 601.9L1226.1 592.8L1227.1 602.9L1228.1 595.9L1229.2 599.6L1230.2 594.0L1231.3 592.2L1232.5 599.7L1233.6 589.4L1234.9 595.8L1236.1 591.3L1237.1 593.2L1237.4 143.5L1255.3 143.5L1255.6 661.8L1272.6 661.8L1272.6 661.8L1273.8 655.1L1274.9 656.6L1275.8 653.0L1276.8 650.0L1277.9 646.8L1279.1 638.2L1280.4 634.0L1281.5 629.7L1282.8 628.8L1284.1 630.3L1285.1 628.5L1286.0 623.5L1287.1 618.2L1288.3 621.6L1289.4 615.1L1290.4 617.5L1291.6 613.0L1292.7 609.9L1294.0 603.2L1295.0 603.9L1296.1 607.6L1297.1 604.5L1298.1 600.5L1299.4 603.5L1300.4 601.4L1301.6 597.0L1302.7 602.5L1303.8 595.0L1304.9 604.8L1305.9 602.2L1307.1 604.2L1308.1 603.9L1308.5 598.5L1308.8 143.5L1327.0 143.5" stroke="#f0cb74" stroke-width="1.35"/><path d="M466.5 183.7L498.1 206.0L516.5 219.3L540.0 243.3L562.7 266.0L573.3 279.9L590.7 300.1L625.3 340.7L645.9 367.3L664.8 390.8L679.2 409.5L720.0 460.0L750.0 495.0L795.0 543.3L813.3 563.3L836.7 588.3L860.0 608.3L886.7 628.3L913.3 643.3L940.0 653.3L960.0 659.0L990.0 661.8L1016.7 660.0L1050.0 651.7L1073.3 641.7L1086.7 633.3L1120.0 608.3L1146.7 588.3L1173.3 565.0L1193.3 543.3L1213.3 521.7L1228.3 504.0L1255.0 471.7L1283.3 436.7L1308.3 405.0L1322.0 389.6" stroke="#eb9fcb" stroke-width="1.15"/></g><path d="M466.2 175.8V662.4" stroke="#5a9fc2" stroke-width="2.1"/><path d="M460.0 661.8H467.0" stroke="#5a9fc2" stroke-width="1.5"/><path d="M460.0 557.1H467.0" stroke="#5a9fc2" stroke-width="1.5"/><path d="M460.0 452.4H467.0" stroke="#5a9fc2" stroke-width="1.5"/><path d="M460.0 347.7H467.0" stroke="#5a9fc2" stroke-width="1.5"/><path d="M460.0 243.0H467.0" stroke="#5a9fc2" stroke-width="1.5"/><path d="M460.0 176.0H467.0" stroke="#5a9fc2" stroke-width="1.5"/><path d="M465.4 666.0H1322.6" stroke="#777" stroke-width="1.7"/><path d="M466.0 666.0V670.2" stroke="#555" stroke-width="1.1"/><path d="M564.7 666.0V670.2" stroke="#555" stroke-width="1.1"/><path d="M671.7 666.0V670.2" stroke="#555" stroke-width="1.1"/><path d="M778.7 666.0V670.2" stroke="#555" stroke-width="1.1"/><path d="M885.7 666.0V670.2" stroke="#555" stroke-width="1.1"/><path d="M992.7 666.0V670.2" stroke="#555" stroke-width="1.1"/><path d="M1099.7 666.0V670.2" stroke="#555" stroke-width="1.1"/><path d="M1206.7 666.0V670.2" stroke="#555" stroke-width="1.1"/><path d="M1313.7 666.0V670.2" stroke="#555" stroke-width="1.1"/><path d="M1322.0 666.0V670.2" stroke="#555" stroke-width="1.1"/></svg>
<span id="t41" style="left:387.40px;top:142.00px;font-size:10.4px;color:#333;letter-spacing:-0.278px;">92.8</span>
<span id="t42" style="left:396.00px;top:209.00px;font-size:10.4px;color:#333;letter-spacing:-0.364px;transform:scaleX(0.9644);transform-origin:0 0;">80</span>
<span id="t43" style="left:396.00px;top:313.00px;font-size:10.4px;color:#333;letter-spacing:-0.364px;transform:scaleX(0.9644);transform-origin:0 0;">60</span>
<span id="t44" style="left:396.00px;top:418.00px;font-size:10.4px;color:#333;letter-spacing:-0.364px;transform:scaleX(0.9644);transform-origin:0 0;">40</span>
<span id="t45" style="left:396.00px;top:523.00px;font-size:10.4px;color:#333;letter-spacing:-0.364px;transform:scaleX(0.9644);transform-origin:0 0;">20</span>
<span id="t46" style="left:401.40px;top:627.00px;font-size:10.4px;color:#333;letter-spacing:-0.364px;transform:scaleX(0.9341);transform-origin:0 0;">0</span>
<span id="t47" style="left:500.00px;top:642.00px;font-size:10.4px;color:#333;letter-spacing:-0.017px;">06 AM</span>
<span id="t48" style="left:607.00px;top:642.00px;font-size:10.4px;color:#333;letter-spacing:-0.017px;">07 AM</span>
<span id="t49" style="left:714.00px;top:642.00px;font-size:10.4px;color:#333;letter-spacing:-0.017px;">08 AM</span>
<span id="t50" style="left:821.00px;top:642.00px;font-size:10.4px;color:#333;letter-spacing:-0.017px;">09 AM</span>
<span id="t51" style="left:928.00px;top:642.00px;font-size:10.4px;color:#333;letter-spacing:-0.017px;">10 AM</span>
<span id="t52" style="left:1035.00px;top:642.00px;font-size:10.4px;color:#333;letter-spacing:0.178px;">11 AM</span>
<span id="t53" style="left:1142.00px;top:642.00px;font-size:10.4px;color:#333;letter-spacing:-0.158px;">12 PM</span>
<span id="t54" style="left:1249.10px;top:642.00px;font-size:10.4px;color:#333;letter-spacing:-0.158px;">01 PM</span>
<div style="left:416px;top:660px;width:30px;height:30px;background:#fff;border:1px solid #dcdcdc;border-radius:3px;"></div>
<svg viewBox="0 0 5 7" style="left:429.5px;top:672.6px;width:5px;height:7px;"><polygon points="4.6,0.2 4.6,6.800 0.300,3.500" fill="#555"/></svg>
<div style="left:452px;top:660px;width:124px;height:30px;background:#fff;border:1px solid #dcdcdc;border-radius:3px;"></div>
<span id="t55" style="left:465.70px;top:670.00px;font-size:14.5px;color:#2b2b2b;letter-spacing:0.436px;">12/12/2024</span>
<svg viewBox="0 0 14 15" style="left:554.8px;top:668.2px;width:14px;height:15px;"><g fill="none" stroke="#999" stroke-width="1.1"><rect x="1" y="2.600" width="12" height="11.400" rx="1"/><path d="M1 5.800h12M4 .8v3M10 .8v3"/></g><rect x="8" y="9" width="3.200" height="3.200" fill="#999"/></svg>
<div style="left:582px;top:660px;width:138px;height:30px;background:#fff;border:1px solid #dcdcdc;border-radius:3px;"></div>
<span id="t56" style="left:595.00px;top:670.00px;font-size:14.5px;color:#2b2b2b;letter-spacing:-0.092px;">05:04:38 AM</span>
<svg viewBox="0 0 14 14" style="left:699px;top:669px;width:14px;height:14px;"><g fill="none" stroke="#999" stroke-width="1.1"><circle cx="7" cy="7" r="6.200"/><path d="M7 3.200V7.300H10.300"/></g></svg>
<div style="left:756px;top:660px;width:30px;height:30px;background:#fff;border:1px solid #dcdcdc;border-radius:3px;"></div>
<svg viewBox="0 0 16 16" style="left:764px;top:668px;width:16px;height:16px;"><g fill="none" stroke="#666" stroke-width="1.1"><path d="M1.200 1v14h14"/><path d="M1.500 10.500C5 9.500 6.500 5.500 14 3"/><path d="M2 14c3-3 7-2 12-6.500" stroke-dasharray="4.500 1.200"/></g></svg>
<div style="left:792px;top:660px;width:102px;height:30px;background:#fff;border:1px solid #dcdcdc;border-radius:3px;"></div>
<div style="left:864px;top:661px;width:1px;height:30px;background:#dcdcdc"></div>
<span id="t57" style="left:805.60px;top:670.00px;font-size:14.5px;color:#2b2b2b;letter-spacing:-0.446px;">8 hours</span>
<svg viewBox="0 0 14 16" style="left:873px;top:668px;width:14px;height:16px;"><g fill="none" stroke="#555" stroke-width="1.500"><rect x="1.800" y="6.800" width="10.400" height="8" rx="1"/><path d="M4 6.800V4.300a3 3 0 0 1 6 0"/></g><circle cx="7" cy="10.800" r="1.200" fill="#555"/></svg>
<div style="left:900px;top:660px;width:30px;height:30px;background:#fff;border:1px solid #ececec;border-radius:3px;"></div>
<svg viewBox="0 0 24 24" style="left:907.50px;top:667.50px;width:16px;height:16px;"><path fill="#d0d0d0" d="M13 3c-4.97 0-9 4.03-9 9H1l3.89 3.89.07.14L9 12H6c0-3.87 3.13-7 7-7s7 3.13 7 7-3.13 7-7 7c-1.93 0-3.68-.79-4.94-2.06l-1.42 1.42C8.27 19.99 10.51 21 13 21c4.97 0 9-4.03 9-9s-4.03-9-9-9zm-1 5v5l4.28 2.54.72-1.21-3.5-2.08V8H12z"/></svg>
<div style="left:966px;top:660px;width:124px;height:30px;background:#fff;border:1px solid #dcdcdc;border-radius:3px;"></div>
<span id="t58" style="left:979.50px;top:670.00px;font-size:14.5px;color:#2b2b2b;letter-spacing:0.414px;">12/12/2024</span>
<svg viewBox="0 0 14 15" style="left:1068.8px;top:668.2px;width:14px;height:15px;"><g fill="none" stroke="#999" stroke-width="1.1"><rect x="1" y="2.600" width="12" height="11.400" rx="1"/><path d="M1 5.800h12M4 .8v3M10 .8v3"/></g><rect x="8" y="9" width="3.200" height="3.200" fill="#999"/></svg>
<div style="left:1096px;top:660px;width:138px;height:30px;background:#fff;border:1px solid #dcdcdc;border-radius:3px;"></div>
<span id="t59" style="left:1109.30px;top:670.00px;font-size:14.5px;color:#2b2b2b;letter-spacing:-0.223px;">01:04:38 PM</span>
<svg viewBox="0 0 14 14" style="left:1212.8px;top:669px;width:14px;height:14px;"><g fill="none" stroke="#999" stroke-width="1.1"><circle cx="7" cy="7" r="6.200"/><path d="M7 3.200V7.300H10.300"/></g></svg>
<div style="left:1240px;top:660px;width:30px;height:30px;background:#fff;border:1px solid #dcdcdc;border-radius:3px;"></div>
<svg viewBox="0 0 5 7" style="left:1253.8px;top:672.6px;width:5px;height:7px;"><polygon points="0.400,0.200 0.400,6.800 4.700,3.500" fill="#555"/></svg>
<svg viewBox="0 0 856 43" style="left:416px;top:699.3px;width:856px;height:43px"><rect x="0" y="0" width="856" height="2" fill="#ececec"/><rect x="0" y="1.600" width="856" height="28.900" fill="#f0b6d0"/><rect x="0" y="1.0" width="1" height="29.5" fill="#f4d68c" opacity="0.84"/><rect x="2" y="1.9" width="1" height="28.6" fill="#ffffff" opacity="0.94"/><rect x="3" y="1.0" width="1" height="29.5" fill="#f4d68c" opacity="0.73"/><rect x="4" y="1.800" width="1" height="28.700" fill="#f8d6e4"/><rect x="5" y="1.0" width="1" height="29.5" fill="#f4d68c" opacity="0.95"/><rect x="7" y="1.0" width="1" height="29.5" fill="#f4d68c" opacity="0.66"/><rect x="8" y="1.800" width="1" height="28.700" fill="#f6c9dc"/><rect x="9" y="1.0" width="1" height="29.5" fill="#f4d68c" opacity="0.66"/><rect x="10" y="1.800" width="1" height="28.700" fill="#f8d6e4"/><rect x="12" y="1.0" width="1" height="29.5" fill="#f4d68c" opacity="0.93"/><rect x="13" y="13.2" width="1" height="14.8" fill="#e0579c" opacity="0.68"/><rect x="14" y="4.0" width="1" height="26.5" fill="#ffffff" opacity="0.99"/><rect x="15" y="9.4" width="1" height="9.0" fill="#e0579c" opacity="0.83"/><rect x="16" y="1.0" width="1" height="29.5" fill="#f4d68c" opacity="0.77"/><rect x="21" y="10.6" width="1" height="19.9" fill="#ffffff" opacity="0.99"/><rect x="23" y="1.800" width="1" height="28.700" fill="#f3bbd5"/><rect x="24" y="1.0" width="1" height="29.5" fill="#f4d68c" opacity="0.67"/><rect x="26" y="10.0" width="1" height="20.5" fill="#ffffff" opacity="0.79"/><rect x="28" y="1.800" width="1" height="28.700" fill="#f6c9dc"/><rect x="29" y="1.0" width="1" height="29.5" fill="#f4d68c" opacity="0.86"/><rect x="30" y="16.8" width="1" height="4.4" fill="#7f9fc8" opacity="0.73"/><rect x="31" y="1.9" width="1" height="28.6" fill="#ffffff" opacity="0.69"/><rect x="32" y="17.2" width="1" height="7.9" fill="#7f9fc8" opacity="0.75"/><rect x="33" y="1.0" width="1" height="29.5" fill="#f4d68c" opacity="0.89"/><rect x="34" y="1.800" width="1" height="28.700" fill="#f3bbd5"/><rect x="36" y="1.0" width="1" height="29.5" fill="#f4d68c" opacity="0.81"/><rect x="37" y="12.3" width="1" height="6.0" fill="#7f9fc8" opacity="0.85"/><rect x="39" y="7.1" width="1" height="13.2" fill="#e0579c" opacity="0.73"/><rect x="40" y="1.0" width="1" height="29.5" fill="#f4d68c" opacity="0.99"/><rect x="41" y="10.8" width="1" height="3.1" fill="#7f9fc8" opacity="0.80"/><rect x="42" y="1.800" width="1" height="28.700" fill="#eea6c9"/><rect x="43" y="8.2" width="1" height="22.3" fill="#ffffff" opacity="0.81"/><rect x="44" y="1.800" width="1" height="28.700" fill="#f3bbd5"/><rect x="45" y="1.800" width="1" height="28.700" fill="#f6c9dc"/><rect x="46" y="1.800" width="1" height="28.700" fill="#f3bbd5"/><rect x="47" y="1.0" width="1" height="29.5" fill="#f4d68c" opacity="0.81"/><rect x="48" y="1.800" width="1" height="28.700" fill="#f3bbd5"/><rect x="49" y="9.5" width="1" height="21.0" fill="#ffffff" opacity="0.95"/><rect x="50" y="1.0" width="1" height="29.5" fill="#f4d68c" opacity="0.93"/><rect x="51" y="10.1" width="1" height="20.4" fill="#ffffff" opacity="0.99"/><rect x="52" y="1.800" width="1" height="28.700" fill="#eea6c9"/><rect x="53" y="1.800" width="1" height="28.700" fill="#f3bbd5"/><rect x="54" y="6.2" width="1" height="24.3" fill="#ffffff" opacity="0.89"/><rect x="55" y="1.800" width="1" height="28.700" fill="#eea6c9"/><rect x="56" y="12.2" width="1" height="7.7" fill="#e0579c" opacity="0.77"/><rect x="58" y="4.5" width="1" height="7.2" fill="#e0579c" opacity="0.84"/><rect x="59" y="10.0" width="1" height="20.5" fill="#ffffff" opacity="0.94"/><rect x="62" y="1.0" width="1" height="29.5" fill="#f4d68c" opacity="0.70"/><rect x="63" y="1.0" width="1" height="29.5" fill="#f4d68c" opacity="0.74"/><rect x="64" y="1.800" width="1" height="28.700" fill="#f8d6e4"/><rect x="65" y="6.0" width="1" height="24.5" fill="#ffffff" opacity="0.72"/><rect x="66" y="12.0" width="1" height="12.2" fill="#e0579c" opacity="0.83"/><rect x="67" y="17.8" width="1" height="6.6" fill="#7f9fc8" opacity="0.66"/><rect x="68" y="11.0" width="1" height="13.5" fill="#e0579c" opacity="0.99"/><rect x="69" y="16.2" width="1" height="7.3" fill="#7f9fc8" opacity="0.95"/><rect x="70" y="1.800" width="1" height="28.700" fill="#eea6c9"/><rect x="71" y="11.0" width="1" height="19.5" fill="#ffffff" opacity="0.89"/><rect x="74" y="9.4" width="1" height="21.1" fill="#ffffff" opacity="0.71"/><rect x="75" y="1.0" width="1" height="29.5" fill="#f4d68c" opacity="0.88"/><rect x="76" y="8.6" width="1" height="7.7" fill="#7f9fc8" opacity="0.86"/><rect x="77" y="1.0" width="1" height="29.5" fill="#f4d68c" opacity="0.74"/><rect x="78" y="1.800" width="1" height="28.700" fill="#f6c9dc"/><rect x="79" y="1.0" width="1" height="29.5" fill="#f4d68c" opacity="0.72"/><rect x="80" y="15.1" width="1" height="3.9" fill="#7f9fc8" opacity="0.93"/><rect x="82" y="1.800" width="1" height="28.700" fill="#f8d6e4"/><rect x="83" y="4.6" width="1" height="25.9" fill="#ffffff" opacity="0.74"/><rect x="84" y="8.8" width="1" height="5.4" fill="#7f9fc8" opacity="0.92"/><rect x="85" y="2.4" width="1" height="28.1" fill="#ffffff" opacity="0.69"/><rect x="87" y="1.800" width="1" height="28.700" fill="#f8d6e4"/><rect x="88" y="1.0" width="1" height="29.5" fill="#f4d68c" opacity="0.76"/><rect x="90" y="1.0" width="1" height="29.5" fill="#f4d68c" opacity="0.72"/><rect x="92" y="1.800" width="1" height="28.700" fill="#f6c9dc"/><rect x="93" y="1.800" width="1" height="28.700" fill="#f8d6e4"/><rect x="95" y="1.0" width="1" height="29.5" fill="#f4d68c" opacity="0.93"/><rect x="96" y="1.800" width="1" height="28.700" fill="#f3bbd5"/><rect x="98" y="1.0" width="1" height="29.5" fill="#f4d68c" opacity="0.98"/><rect x="99" y="2.0" width="1" height="8.2" fill="#e0579c" opacity="0.74"/><rect x="101" y="1.0" width="1" height="29.5" fill="#f4d68c" opacity="0.70"/><rect x="102" y="5.1" width="1" height="25.4" fill="#ffffff" opacity="0.99"/><rect x="103" y="15.9" width="1" height="3.6" fill="#7f9fc8" opacity="0.89"/><rect x="106" y="1.0" width="1" height="29.5" fill="#f4d68c" opacity="0.69"/><rect x="108" y="1.800" width="1" height="28.700" fill="#eea6c9"/><rect x="109" y="1.800" width="1" height="28.700" fill="#f6c9dc"/><rect x="111" y="1.0" width="1" height="29.5" fill="#f4d68c" opacity="0.94"/><rect x="112" y="1.0" width="1" height="29.5" fill="#f4d68c" opacity="0.66"/><rect x="113" y="6.7" width="1" height="23.8" fill="#ffffff" opacity="0.89"/><rect x="114" y="1.0" width="1" height="29.5" fill="#f4d68c" opacity="0.75"/><rect x="115" y="12.0" width="1" height="18.5" fill="#ffffff" opacity="0.85"/><rect x="116" y="5.8" width="1" height="5.8" fill="#7f9fc8" opacity="0.68"/><rect x="118" y="2.6" width="1" height="27.9" fill="#ffffff" opacity="1.00"/><rect x="119" y="1.800" width="1" height="28.700" fill="#f8d6e4"/><rect x="120" y="1.0" width="1" height="29.5" fill="#f4d68c" opacity="0.86"/><rect x="122" y="1.800" width="1" height="28.700" fill="#eea6c9"/><rect x="123" y="1.800" width="1" height="28.700" fill="#eea6c9"/><rect x="124" y="8.7" width="1" height="11.8" fill="#e0579c" opacity="0.97"/><rect x="125" y="1.800" width="1" height="28.700" fill="#f8d6e4"/><rect x="126" y="1.800" width="1" height="28.700" fill="#f6c9dc"/><rect x="127" y="7.7" width="1" height="13.0" fill="#e0579c" opacity="0.98"/><rect x="129" y="9.5" width="1" height="21.0" fill="#ffffff" opacity="0.70"/><rect x="130" y="13.2" width="1" height="14.5" fill="#e0579c" opacity="0.84"/><rect x="134" y="1.800" width="1" height="28.700" fill="#f3bbd5"/><rect x="135" y="6.5" width="1" height="7.7" fill="#e0579c" opacity="0.78"/><rect x="136" y="1.0" width="1" height="29.5" fill="#f4d68c" opacity="0.92"/><rect x="137" y="11.9" width="1" height="18.6" fill="#ffffff" opacity="0.82"/><rect x="138" y="1.800" width="1" height="28.700" fill="#f6c9dc"/><rect x="139" y="10.6" width="1" height="14.6" fill="#e0579c" opacity="0.79"/><rect x="141" y="4.6" width="1" height="8.3" fill="#e0579c" opacity="0.90"/><rect x="143" y="1.800" width="1" height="28.700" fill="#eea6c9"/><rect x="144" y="1.800" width="1" height="28.700" fill="#f6c9dc"/><rect x="145" y="1.800" width="1" height="28.700" fill="#f6c9dc"/><rect x="146" y="1.0" width="1" height="29.5" fill="#f4d68c" opacity="0.80"/><rect x="147" y="1.800" width="1" height="28.700" fill="#f6c9dc"/><rect x="148" y="1.0" width="1" height="29.5" fill="#f4d68c" opacity="0.97"/><rect x="149" y="6.4" width="1" height="24.1" fill="#ffffff" opacity="0.91"/><rect x="150" y="1.0" width="1" height="29.5" fill="#f4d68c" opacity="0.66"/><rect x="151" y="1.800" width="1" height="28.700" fill="#f8d6e4"/><rect x="152" y="1.0" width="1" height="29.5" fill="#f4d68c" opacity="0.84"/><rect x="153" y="4.6" width="1" height="25.9" fill="#ffffff" opacity="0.88"/><rect x="154" y="11.1" width="1" height="19.4" fill="#ffffff" opacity="0.68"/><rect x="155" y="1.800" width="1" height="28.700" fill="#f3bbd5"/><rect x="156" y="1.800" width="1" height="28.700" fill="#f3bbd5"/><rect x="157" y="11.4" width="1" height="19.1" fill="#ffffff" opacity="0.77"/><rect x="160" y="4.8" width="1" height="25.7" fill="#ffffff" opacity="0.90"/><rect x="162" y="1.800" width="1" height="28.700" fill="#f3bbd5"/><rect x="164" y="11.3" width="1" height="19.2" fill="#ffffff" opacity="0.70"/><rect x="165" y="1.0" width="1" height="29.5" fill="#f4d68c" opacity="0.90"/><rect x="167" y="1.800" width="1" height="28.700" fill="#f3bbd5"/><rect x="169" y="3.6" width="1" height="26.9" fill="#ffffff" opacity="0.84"/><rect x="170" y="1.800" width="1" height="28.700" fill="#f6c9dc"/><rect x="171" y="1.0" width="1" height="29.5" fill="#f4d68c" opacity="0.78"/><rect x="172" y="1.800" width="1" height="28.700" fill="#f3bbd5"/><rect x="173" y="1.0" width="1" height="29.5" fill="#f4d68c" opacity="0.92"/><rect x="174" y="1.800" width="1" height="28.700" fill="#f6c9dc"/><rect x="175" y="1.0" width="1" height="29.5" fill="#f4d68c" opacity="0.95"/><rect x="176" y="4.6" width="1" height="25.9" fill="#ffffff" opacity="0.68"/><rect x="177" y="9.2" width="1" height="21.3" fill="#ffffff" opacity="0.71"/><rect x="180" y="1.800" width="1" height="28.700" fill="#f8d6e4"/><rect x="182" y="3.6" width="1" height="26.9" fill="#ffffff" opacity="0.95"/><rect x="183" y="1.0" width="1" height="29.5" fill="#f4d68c" opacity="0.75"/><rect x="184" y="1.800" width="1" height="28.700" fill="#f8d6e4"/><rect x="185" y="1.800" width="1" height="28.700" fill="#f3bbd5"/><rect x="187" y="1.800" width="1" height="28.700" fill="#f8d6e4"/><rect x="188" y="3.7" width="1" height="26.8" fill="#ffffff" opacity="0.87"/><rect x="189" y="4.2" width="1" height="26.3" fill="#ffffff" opacity="0.71"/><rect x="190" y="1.800" width="1" height="28.700" fill="#eea6c9"/><rect x="191" y="6.9" width="1" height="23.6" fill="#ffffff" opacity="0.88"/><rect x="192" y="8.7" width="1" height="15.6" fill="#e0579c" opacity="0.96"/><rect x="193" y="9.9" width="1" height="20.6" fill="#ffffff" opacity="0.87"/><rect x="194" y="1.800" width="1" height="28.700" fill="#f6c9dc"/><rect x="195" y="2.0" width="1" height="9.4" fill="#e0579c" opacity="0.76"/><rect x="196" y="1.0" width="1" height="29.5" fill="#f4d68c" opacity="0.89"/><rect x="197" y="10.4" width="1" height="20.1" fill="#ffffff" opacity="0.92"/><rect x="199" y="1.800" width="1" height="28.700" fill="#f6c9dc"/><rect x="200" y="1.800" width="1" height="28.700" fill="#eea6c9"/><rect x="201" y="3.1" width="1" height="6.4" fill="#e0579c" opacity="0.68"/><rect x="202" y="1.0" width="1" height="29.5" fill="#f4d68c" opacity="0.71"/><rect x="203" y="10.3" width="1" height="11.4" fill="#e0579c" opacity="0.80"/><rect x="204" y="1.800" width="1" height="28.700" fill="#f8d6e4"/><rect x="205" y="10.2" width="1" height="10.4" fill="#e0579c" opacity="0.81"/><rect x="206" y="4.4" width="1" height="26.1" fill="#ffffff" opacity="0.95"/><rect x="207" y="6.2" width="1" height="10.0" fill="#e0579c" opacity="0.99"/><rect x="208" y="1.800" width="1" height="28.700" fill="#f3bbd5"/><rect x="209" y="6.5" width="1" height="24.0" fill="#ffffff" opacity="0.72"/><rect x="210" y="1.0" width="1" height="29.5" fill="#f4d68c" opacity="0.71"/><rect x="211" y="3.9" width="1" height="6.3" fill="#e0579c" opacity="0.69"/><rect x="212" y="6.8" width="1" height="23.7" fill="#ffffff" opacity="0.67"/><rect x="213" y="1.800" width="1" height="28.700" fill="#f6c9dc"/><rect x="214" y="1.0" width="1" height="29.5" fill="#f4d68c" opacity="0.66"/><rect x="215" y="12.9" width="1" height="14.8" fill="#e0579c" opacity="0.73"/><rect x="216" y="1.0" width="1" height="29.5" fill="#f4d68c" opacity="0.72"/><rect x="219" y="1.0" width="1" height="29.5" fill="#f4d68c" opacity="0.99"/><rect x="221" y="1.800" width="1" height="28.700" fill="#f3bbd5"/><rect x="222" y="5.2" width="1" height="25.3" fill="#ffffff" opacity="1.00"/><rect x="223" y="1.0" width="1" height="29.5" fill="#f4d68c" opacity="0.67"/><rect x="224" y="2.9" width="1" height="12.2" fill="#e0579c" opacity="0.69"/><rect x="225" y="1.800" width="1" height="28.700" fill="#f6c9dc"/><rect x="226" y="4.1" width="1" height="11.1" fill="#e0579c" opacity="0.77"/><rect x="228" y="1.0" width="1" height="29.5" fill="#f4d68c" opacity="0.82"/><rect x="229" y="1.800" width="1" height="28.700" fill="#f8d6e4"/><rect x="230" y="4.8" width="1" height="25.7" fill="#ffffff" opacity="0.95"/><rect x="231" y="1.800" width="1" height="28.700" fill="#f8d6e4"/><rect x="232" y="9.3" width="1" height="21.2" fill="#ffffff" opacity="0.91"/><rect x="234" y="1.800" width="1" height="28.700" fill="#f8d6e4"/><rect x="235" y="7.2" width="1" height="13.0" fill="#e0579c" opacity="0.77"/><rect x="239" y="3.6" width="1" height="26.9" fill="#ffffff" opacity="0.91"/><rect x="240" y="1.800" width="1" height="28.700" fill="#f6c9dc"/><rect x="241" y="1.0" width="1" height="29.5" fill="#f4d68c" opacity="0.86"/><rect x="242" y="1.800" width="1" height="28.700" fill="#f6c9dc"/><rect x="243" y="12.7" width="1" height="13.3" fill="#e0579c" opacity="0.77"/><rect x="244" y="1.0" width="1" height="29.5" fill="#f4d68c" opacity="0.68"/><rect x="245" y="1.0" width="1" height="29.5" fill="#f4d68c" opacity="0.69"/><rect x="246" y="1.800" width="1" height="28.700" fill="#f6c9dc"/><rect x="247" y="1.800" width="1" height="28.700" fill="#f6c9dc"/><rect x="249" y="11.9" width="1" height="18.6" fill="#ffffff" opacity="0.69"/><rect x="250" y="1.0" width="1" height="29.5" fill="#f4d68c" opacity="0.72"/><rect x="252" y="12.9" width="1" height="9.2" fill="#e0579c" opacity="0.96"/><rect x="253" y="1.800" width="1" height="28.700" fill="#f6c9dc"/><rect x="254" y="10.0" width="1" height="20.5" fill="#ffffff" opacity="0.86"/><rect x="255" y="1.800" width="1" height="28.700" fill="#f3bbd5"/><rect x="256" y="6.5" width="1" height="24.0" fill="#ffffff" opacity="0.73"/><rect x="259" y="1.800" width="1" height="28.700" fill="#f8d6e4"/><rect x="260" y="1.800" width="1" height="28.700" fill="#f8d6e4"/><rect x="261" y="1.800" width="1" height="28.700" fill="#f6c9dc"/><rect x="262" y="10.7" width="1" height="6.8" fill="#e0579c" opacity="0.77"/><rect x="264" y="1.800" width="1" height="28.700" fill="#f6c9dc"/><rect x="265" y="1.800" width="1" height="28.700" fill="#f3bbd5"/><rect x="266" y="1.800" width="1" height="28.700" fill="#eea6c9"/><rect x="267" y="2.8" width="1" height="8.2" fill="#e0579c" opacity="0.71"/><rect x="271" y="8.7" width="1" height="7.7" fill="#7f9fc8" opacity="0.97"/><rect x="272" y="1.800" width="1" height="28.700" fill="#f8d6e4"/><rect x="273" y="9.0" width="1" height="6.3" fill="#e0579c" opacity="0.99"/><rect x="274" y="10.9" width="1" height="19.6" fill="#ffffff" opacity="0.66"/><rect x="275" y="1.800" width="1" height="28.700" fill="#f8d6e4"/><rect x="276" y="9.4" width="1" height="21.1" fill="#ffffff" opacity="0.75"/><rect x="277" y="6.0" width="1" height="13.4" fill="#e0579c" opacity="0.91"/><rect x="278" y="1.0" width="1" height="29.5" fill="#f4d68c" opacity="0.69"/><rect x="279" y="1.800" width="1" height="28.700" fill="#eea6c9"/><rect x="280" y="11.7" width="1" height="8.8" fill="#e0579c" opacity="0.78"/><rect x="282" y="1.800" width="1" height="28.700" fill="#f8d6e4"/><rect x="283" y="14.0" width="1" height="8.2" fill="#e0579c" opacity="0.98"/><rect x="284" y="1.0" width="1" height="29.5" fill="#f4d68c" opacity="0.66"/><rect x="287" y="2.0" width="1" height="12.3" fill="#e0579c" opacity="0.70"/><rect x="288" y="11.5" width="1" height="19.0" fill="#ffffff" opacity="0.65"/><rect x="290" y="1.0" width="1" height="29.5" fill="#f4d68c" opacity="0.99"/><rect x="291" y="1.800" width="1" height="28.700" fill="#eea6c9"/><rect x="292" y="6.2" width="1" height="24.3" fill="#ffffff" opacity="0.77"/><rect x="293" y="1.800" width="1" height="28.700" fill="#f3bbd5"/><rect x="294" y="1.0" width="1" height="29.5" fill="#f4d68c" opacity="0.89"/><rect x="295" y="10.6" width="1" height="9.4" fill="#e0579c" opacity="0.66"/><rect x="296" y="12.0" width="1" height="18.5" fill="#ffffff" opacity="0.71"/><rect x="299" y="1.800" width="1" height="28.700" fill="#f3bbd5"/><rect x="300" y="6.5" width="1" height="3.8" fill="#7f9fc8" opacity="0.66"/><rect x="302" y="1.800" width="1" height="28.700" fill="#f8d6e4"/><rect x="303" y="1.0" width="1" height="29.5" fill="#f4d68c" opacity="0.87"/><rect x="304" y="1.800" width="1" height="28.700" fill="#f6c9dc"/><rect x="305" y="6.1" width="1" height="10.5" fill="#e0579c" opacity="0.93"/><rect x="306" y="3.7" width="1" height="9.1" fill="#e0579c" opacity="0.83"/><rect x="307" y="11.9" width="1" height="15.3" fill="#e0579c" opacity="0.86"/><rect x="308" y="7.7" width="1" height="22.8" fill="#ffffff" opacity="0.84"/><rect x="309" y="5.2" width="1" height="13.1" fill="#e0579c" opacity="0.97"/><rect x="310" y="8.6" width="1" height="21.9" fill="#ffffff" opacity="0.78"/><rect x="311" y="12.7" width="1" height="15.6" fill="#e0579c" opacity="0.88"/><rect x="312" y="11.2" width="1" height="19.3" fill="#ffffff" opacity="0.71"/><rect x="313" y="1.0" width="1" height="29.5" fill="#f4d68c" opacity="0.94"/><rect x="315" y="1.800" width="1" height="28.700" fill="#f8d6e4"/><rect x="316" y="2.6" width="1" height="5.1" fill="#7f9fc8" opacity="0.79"/><rect x="317" y="1.800" width="1" height="28.700" fill="#eea6c9"/><rect x="319" y="8.2" width="1" height="22.3" fill="#ffffff" opacity="0.69"/><rect x="322" y="1.800" width="1" height="28.700" fill="#f8d6e4"/><rect x="323" y="5.3" width="1" height="11.6" fill="#e0579c" opacity="0.71"/><rect x="324" y="1.800" width="1" height="28.700" fill="#eea6c9"/><rect x="325" y="1.800" width="1" height="28.700" fill="#f8d6e4"/><rect x="326" y="1.800" width="1" height="28.700" fill="#f6c9dc"/><rect x="327" y="8.2" width="1" height="22.3" fill="#ffffff" opacity="0.76"/><rect x="328" y="1.800" width="1" height="28.700" fill="#eea6c9"/><rect x="329" y="11.6" width="1" height="18.9" fill="#ffffff" opacity="0.84"/><rect x="330" y="1.0" width="1" height="29.5" fill="#f4d68c" opacity="0.69"/><rect x="331" y="1.0" width="1" height="29.5" fill="#f4d68c" opacity="0.75"/><rect x="332" y="3.3" width="1" height="27.2" fill="#ffffff" opacity="0.69"/><rect x="333" y="1.0" width="1" height="29.5" fill="#f4d68c" opacity="0.97"/><rect x="334" y="3.8" width="1" height="26.7" fill="#ffffff" opacity="0.98"/><rect x="336" y="1.0" width="1" height="29.5" fill="#f4d68c" opacity="0.77"/><rect x="337" y="1.800" width="1" height="28.700" fill="#f3bbd5"/><rect x="338" y="10.8" width="1" height="11.3" fill="#e0579c" opacity="0.95"/><rect x="340" y="1.0" width="1" height="29.5" fill="#f4d68c" opacity="0.70"/><rect x="341" y="6.5" width="1" height="13.6" fill="#e0579c" opacity="0.75"/><rect x="343" y="1.0" width="1" height="29.5" fill="#f4d68c" opacity="0.95"/><rect x="344" y="1.800" width="1" height="28.700" fill="#eea6c9"/><rect x="345" y="8.0" width="1" height="22.5" fill="#ffffff" opacity="0.67"/><rect x="346" y="1.800" width="1" height="28.700" fill="#f6c9dc"/><rect x="347" y="3.0" width="1" height="27.5" fill="#ffffff" opacity="0.79"/><rect x="348" y="1.800" width="1" height="28.700" fill="#f3bbd5"/><rect x="349" y="7.3" width="1" height="23.2" fill="#ffffff" opacity="0.80"/><rect x="350" y="1.800" width="1" height="28.700" fill="#f3bbd5"/><rect x="353" y="1.800" width="1" height="28.700" fill="#f3bbd5"/><rect x="354" y="1.0" width="1" height="29.5" fill="#f4d68c" opacity="0.99"/><rect x="356" y="1.800" width="1" height="28.700" fill="#eea6c9"/><rect x="357" y="1.0" width="1" height="29.5" fill="#f4d68c" opacity="0.99"/><rect x="358" y="7.6" width="1" height="11.3" fill="#e0579c" opacity="0.96"/><rect x="360" y="9.3" width="1" height="6.7" fill="#e0579c" opacity="0.80"/><rect x="362" y="10.5" width="1" height="20.0" fill="#ffffff" opacity="0.78"/><rect x="363" y="1.800" width="1" height="28.700" fill="#eea6c9"/><rect x="364" y="6.8" width="1" height="23.7" fill="#ffffff" opacity="0.69"/><rect x="365" y="1.800" width="1" height="28.700" fill="#f3bbd5"/><rect x="366" y="5.6" width="1" height="24.9" fill="#ffffff" opacity="0.78"/><rect x="367" y="12.9" width="1" height="12.9" fill="#e0579c" opacity="0.69"/><rect x="368" y="1.800" width="1" height="28.700" fill="#f6c9dc"/><rect x="369" y="1.800" width="1" height="28.700" fill="#f6c9dc"/><rect x="370" y="1.0" width="1" height="29.5" fill="#f4d68c" opacity="0.80"/><rect x="371" y="2.1" width="1" height="28.4" fill="#ffffff" opacity="0.91"/><rect x="372" y="1.0" width="1" height="29.5" fill="#f4d68c" opacity="0.81"/><rect x="373" y="1.0" width="1" height="29.5" fill="#f4d68c" opacity="0.93"/><rect x="375" y="13.1" width="1" height="8.2" fill="#e0579c" opacity="0.70"/><rect x="376" y="1.0" width="1" height="29.5" fill="#f4d68c" opacity="0.84"/><rect x="377" y="3.6" width="1" height="26.9" fill="#ffffff" opacity="0.96"/><rect x="378" y="11.5" width="1" height="9.8" fill="#e0579c" opacity="0.82"/><rect x="379" y="1.800" width="1" height="28.700" fill="#eea6c9"/><rect x="380" y="1.0" width="1" height="29.5" fill="#f4d68c" opacity="0.83"/><rect x="381" y="9.5" width="1" height="12.6" fill="#e0579c" opacity="0.80"/><rect x="382" y="11.8" width="1" height="18.7" fill="#ffffff" opacity="0.89"/><rect x="384" y="1.800" width="1" height="28.700" fill="#f6c9dc"/><rect x="385" y="1.0" width="1" height="29.5" fill="#f4d68c" opacity="0.97"/><rect x="386" y="1.800" width="1" height="28.700" fill="#f3bbd5"/><rect x="388" y="1.0" width="1" height="29.5" fill="#f4d68c" opacity="0.76"/><rect x="390" y="7.1" width="1" height="23.4" fill="#ffffff" opacity="0.97"/><rect x="391" y="4.7" width="1" height="14.3" fill="#e0579c" opacity="0.71"/><rect x="393" y="1.800" width="1" height="28.700" fill="#f3bbd5"/><rect x="395" y="5.2" width="1" height="4.5" fill="#7f9fc8" opacity="0.96"/><rect x="396" y="7.2" width="1" height="23.3" fill="#ffffff" opacity="0.87"/><rect x="397" y="1.0" width="1" height="29.5" fill="#f4d68c" opacity="0.92"/><rect x="399" y="1.800" width="1" height="28.700" fill="#f6c9dc"/><rect x="401" y="1.800" width="1" height="28.700" fill="#eea6c9"/><rect x="402" y="2.9" width="1" height="27.6" fill="#ffffff" opacity="0.81"/><rect x="404" y="1.800" width="1" height="28.700" fill="#f6c9dc"/><rect x="405" y="1.0" width="1" height="29.5" fill="#f4d68c" opacity="0.74"/><rect x="407" y="1.800" width="1" height="28.700" fill="#f3bbd5"/><rect x="408" y="1.0" width="1" height="29.5" fill="#f4d68c" opacity="0.71"/><rect x="410" y="1.0" width="1" height="29.5" fill="#f4d68c" opacity="0.69"/><rect x="412" y="1.0" width="1" height="29.5" fill="#f4d68c" opacity="0.89"/><rect x="414" y="9.5" width="1" height="21.0" fill="#ffffff" opacity="0.79"/><rect x="415" y="11.6" width="1" height="6.1" fill="#7f9fc8" opacity="0.80"/><rect x="416" y="9.8" width="1" height="20.7" fill="#ffffff" opacity="0.95"/><rect x="417" y="8.9" width="1" height="8.7" fill="#e0579c" opacity="0.96"/><rect x="418" y="1.800" width="1" height="28.700" fill="#f8d6e4"/><rect x="419" y="1.0" width="1" height="29.5" fill="#f4d68c" opacity="1.00"/><rect x="420" y="4.0" width="1" height="13.2" fill="#e0579c" opacity="0.77"/><rect x="422" y="7.2" width="1" height="23.3" fill="#ffffff" opacity="0.95"/><rect x="423" y="8.4" width="1" height="14.6" fill="#e0579c" opacity="0.81"/><rect x="425" y="1.0" width="1" height="29.5" fill="#f4d68c" opacity="0.68"/><rect x="427" y="1.0" width="1" height="29.5" fill="#f4d68c" opacity="0.96"/><rect x="430" y="1.800" width="1" height="28.700" fill="#f6c9dc"/><rect x="431" y="8.6" width="1" height="13.6" fill="#e0579c" opacity="0.80"/><rect x="432" y="1.0" width="1" height="29.5" fill="#f4d68c" opacity="0.71"/><rect x="434" y="1.800" width="1" height="28.700" fill="#eea6c9"/><rect x="435" y="1.0" width="1" height="29.5" fill="#f4d68c" opacity="0.90"/><rect x="436" y="5.8" width="1" height="24.7" fill="#ffffff" opacity="0.72"/><rect x="437" y="8.8" width="1" height="7.1" fill="#e0579c" opacity="0.67"/><rect x="439" y="2.8" width="1" height="27.7" fill="#ffffff" opacity="0.84"/><rect x="441" y="6.6" width="1" height="6.7" fill="#e0579c" opacity="0.75"/><rect x="442" y="1.0" width="1" height="29.5" fill="#f4d68c" opacity="0.98"/><rect x="443" y="11.5" width="1" height="19.0" fill="#ffffff" opacity="0.82"/><rect x="444" y="5.0" width="1" height="15.6" fill="#e0579c" opacity="0.72"/><rect x="446" y="4.1" width="1" height="26.4" fill="#ffffff" opacity="0.99"/><rect x="448" y="1.800" width="1" height="28.700" fill="#eea6c9"/><rect x="449" y="1.800" width="1" height="28.700" fill="#f8d6e4"/><rect x="450" y="1.0" width="1" height="29.5" fill="#f4d68c" opacity="0.69"/><rect x="451" y="1.800" width="1" height="28.700" fill="#f6c9dc"/><rect x="452" y="1.800" width="1" height="28.700" fill="#eea6c9"/><rect x="453" y="1.0" width="1" height="29.5" fill="#f4d68c" opacity="0.95"/><rect x="455" y="1.800" width="1" height="28.700" fill="#f8d6e4"/><rect x="456" y="1.0" width="1" height="29.5" fill="#f4d68c" opacity="0.84"/><rect x="457" y="1.800" width="1" height="28.700" fill="#f6c9dc"/><rect x="458" y="6.2" width="1" height="24.3" fill="#ffffff" opacity="0.65"/><rect x="459" y="1.800" width="1" height="28.700" fill="#eea6c9"/><rect x="461" y="1.0" width="1" height="29.5" fill="#f4d68c" opacity="0.67"/><rect x="462" y="13.9" width="1" height="7.6" fill="#7f9fc8" opacity="0.72"/><rect x="463" y="11.8" width="1" height="18.7" fill="#ffffff" opacity="0.91"/><rect x="464" y="10.8" width="1" height="7.5" fill="#e0579c" opacity="0.84"/><rect x="466" y="3.2" width="1" height="27.3" fill="#ffffff" opacity="0.87"/><rect x="467" y="1.800" width="1" height="28.700" fill="#f6c9dc"/><rect x="469" y="10.4" width="1" height="11.5" fill="#e0579c" opacity="0.88"/><rect x="471" y="8.8" width="1" height="21.7" fill="#ffffff" opacity="0.80"/><rect x="473" y="1.800" width="1" height="28.700" fill="#f6c9dc"/><rect x="474" y="1.800" width="1" height="28.700" fill="#f8d6e4"/><rect x="476" y="1.800" width="1" height="28.700" fill="#eea6c9"/><rect x="477" y="1.800" width="1" height="28.700" fill="#eea6c9"/><rect x="478" y="5.8" width="1" height="24.7" fill="#ffffff" opacity="0.79"/><rect x="479" y="1.800" width="1" height="28.700" fill="#eea6c9"/><rect x="480" y="1.0" width="1" height="29.5" fill="#f4d68c" opacity="0.66"/><rect x="481" y="5.3" width="1" height="25.2" fill="#ffffff" opacity="0.72"/><rect x="482" y="1.800" width="1" height="28.700" fill="#f8d6e4"/><rect x="484" y="8.8" width="1" height="4.5" fill="#7f9fc8" opacity="0.67"/><rect x="486" y="11.3" width="1" height="19.2" fill="#ffffff" opacity="0.85"/><rect x="487" y="1.800" width="1" height="28.700" fill="#eea6c9"/><rect x="488" y="1.0" width="1" height="29.5" fill="#f4d68c" opacity="0.83"/><rect x="489" y="1.800" width="1" height="28.700" fill="#f6c9dc"/><rect x="490" y="7.7" width="1" height="8.5" fill="#e0579c" opacity="0.97"/><rect x="491" y="1.800" width="1" height="28.700" fill="#f6c9dc"/><rect x="492" y="7.0" width="1" height="23.5" fill="#ffffff" opacity="0.82"/><rect x="493" y="1.800" width="1" height="28.700" fill="#f8d6e4"/><rect x="494" y="11.3" width="1" height="14.0" fill="#e0579c" opacity="0.76"/><rect x="495" y="1.800" width="1" height="28.700" fill="#f6c9dc"/><rect x="496" y="8.7" width="1" height="21.8" fill="#ffffff" opacity="0.73"/><rect x="498" y="1.800" width="1" height="28.700" fill="#eea6c9"/><rect x="499" y="8.7" width="1" height="21.8" fill="#ffffff" opacity="0.83"/><rect x="500" y="1.800" width="1" height="28.700" fill="#f6c9dc"/><rect x="501" y="1.0" width="1" height="29.5" fill="#f4d68c" opacity="0.82"/><rect x="502" y="8.6" width="1" height="21.9" fill="#ffffff" opacity="0.77"/><rect x="503" y="1.800" width="1" height="28.700" fill="#f3bbd5"/><rect x="504" y="1.800" width="1" height="28.700" fill="#f3bbd5"/><rect x="505" y="9.5" width="1" height="13.9" fill="#e0579c" opacity="0.91"/><rect x="506" y="1.0" width="1" height="29.5" fill="#f4d68c" opacity="0.68"/><rect x="507" y="1.800" width="1" height="28.700" fill="#eea6c9"/><rect x="510" y="5.9" width="1" height="24.6" fill="#ffffff" opacity="0.78"/><rect x="511" y="1.0" width="1" height="29.5" fill="#f4d68c" opacity="0.88"/><rect x="512" y="1.800" width="1" height="28.700" fill="#f8d6e4"/><rect x="514" y="1.0" width="1" height="29.5" fill="#f4d68c" opacity="0.80"/><rect x="515" y="9.3" width="1" height="21.2" fill="#ffffff" opacity="0.91"/><rect x="516" y="1.0" width="1" height="29.5" fill="#f4d68c" opacity="0.90"/><rect x="517" y="1.800" width="1" height="28.700" fill="#eea6c9"/><rect x="518" y="1.800" width="1" height="28.700" fill="#f8d6e4"/><rect x="519" y="1.800" width="1" height="28.700" fill="#f8d6e4"/><rect x="520" y="6.4" width="1" height="11.0" fill="#e0579c" opacity="0.80"/><rect x="521" y="1.0" width="1" height="29.5" fill="#f4d68c" opacity="0.79"/><rect x="523" y="1.800" width="1" height="28.700" fill="#f6c9dc"/><rect x="524" y="1.800" width="1" height="28.700" fill="#f6c9dc"/><rect x="525" y="7.9" width="1" height="22.6" fill="#ffffff" opacity="0.98"/><rect x="526" y="1.0" width="1" height="29.5" fill="#f4d68c" opacity="0.95"/><rect x="527" y="1.800" width="1" height="28.700" fill="#eea6c9"/><rect x="528" y="8.8" width="1" height="21.7" fill="#ffffff" opacity="0.87"/><rect x="529" y="9.4" width="1" height="11.1" fill="#e0579c" opacity="0.66"/><rect x="530" y="11.5" width="1" height="4.7" fill="#7f9fc8" opacity="0.84"/><rect x="531" y="1.0" width="1" height="29.5" fill="#f4d68c" opacity="0.69"/><rect x="532" y="3.9" width="1" height="26.6" fill="#ffffff" opacity="0.79"/><rect x="534" y="1.0" width="1" height="29.5" fill="#f4d68c" opacity="0.91"/><rect x="535" y="7.5" width="1" height="23.0" fill="#ffffff" opacity="0.92"/><rect x="536" y="1.800" width="1" height="28.700" fill="#f8d6e4"/><rect x="537" y="8.4" width="1" height="22.1" fill="#ffffff" opacity="0.94"/><rect x="538" y="1.0" width="1" height="29.5" fill="#f4d68c" opacity="0.70"/><rect x="540" y="1.0" width="1" height="29.5" fill="#f4d68c" opacity="0.75"/><rect x="541" y="1.800" width="1" height="28.700" fill="#f6c9dc"/><rect x="542" y="4.9" width="1" height="11.3" fill="#e0579c" opacity="0.79"/><rect x="544" y="9.2" width="1" height="4.0" fill="#7f9fc8" opacity="0.77"/><rect x="545" y="6.1" width="1" height="24.4" fill="#ffffff" opacity="0.92"/><rect x="547" y="1.800" width="1" height="28.700" fill="#f6c9dc"/><rect x="548" y="1.800" width="1" height="28.700" fill="#eea6c9"/><rect x="549" y="1.800" width="1" height="28.700" fill="#eea6c9"/><rect x="550" y="1.0" width="1" height="29.5" fill="#f4d68c" opacity="0.67"/><rect x="552" y="10.9" width="1" height="19.6" fill="#ffffff" opacity="0.84"/><rect x="554" y="1.800" width="1" height="28.700" fill="#f6c9dc"/><rect x="555" y="3.5" width="1" height="27.0" fill="#ffffff" opacity="0.95"/><rect x="556" y="6.5" width="1" height="11.2" fill="#e0579c" opacity="0.95"/><rect x="557" y="1.0" width="1" height="29.5" fill="#f4d68c" opacity="0.78"/><rect x="559" y="7.8" width="1" height="10.5" fill="#e0579c" opacity="0.82"/><rect x="560" y="1.800" width="1" height="28.700" fill="#f6c9dc"/><rect x="561" y="1.800" width="1" height="28.700" fill="#f3bbd5"/><rect x="562" y="1.0" width="1" height="29.5" fill="#f4d68c" opacity="0.78"/><rect x="563" y="4.1" width="1" height="26.4" fill="#ffffff" opacity="0.77"/><rect x="565" y="8.3" width="1" height="22.2" fill="#ffffff" opacity="0.83"/><rect x="566" y="1.0" width="1" height="29.5" fill="#f4d68c" opacity="0.82"/><rect x="567" y="6.5" width="1" height="24.0" fill="#ffffff" opacity="0.80"/><rect x="569" y="9.6" width="1" height="20.9" fill="#ffffff" opacity="0.88"/><rect x="570" y="1.0" width="1" height="29.5" fill="#f4d68c" opacity="0.69"/><rect x="571" y="5.2" width="1" height="25.3" fill="#ffffff" opacity="0.93"/><rect x="572" y="1.800" width="1" height="28.700" fill="#eea6c9"/><rect x="573" y="1.0" width="1" height="29.5" fill="#f4d68c" opacity="0.81"/><rect x="574" y="1.800" width="1" height="28.700" fill="#f3bbd5"/><rect x="575" y="1.800" width="1" height="28.700" fill="#eea6c9"/><rect x="577" y="9.5" width="1" height="21.0" fill="#ffffff" opacity="0.80"/><rect x="578" y="1.800" width="1" height="28.700" fill="#f8d6e4"/><rect x="579" y="1.800" width="1" height="28.700" fill="#f3bbd5"/><rect x="580" y="1.800" width="1" height="28.700" fill="#eea6c9"/><rect x="582" y="1.0" width="1" height="29.5" fill="#f4d68c" opacity="0.93"/><rect x="583" y="1.0" width="1" height="29.5" fill="#f4d68c" opacity="0.84"/><rect x="585" y="5.6" width="1" height="24.9" fill="#ffffff" opacity="0.71"/><rect x="586" y="1.0" width="1" height="29.5" fill="#f4d68c" opacity="0.76"/><rect x="587" y="13.6" width="1" height="11.1" fill="#e0579c" opacity="0.94"/><rect x="589" y="9.3" width="1" height="21.2" fill="#ffffff" opacity="0.80"/><rect x="591" y="1.800" width="1" height="28.700" fill="#f8d6e4"/><rect x="592" y="13.9" width="1" height="6.9" fill="#7f9fc8" opacity="0.91"/><rect x="594" y="8.8" width="1" height="21.7" fill="#ffffff" opacity="0.93"/><rect x="595" y="1.800" width="1" height="28.700" fill="#eea6c9"/><rect x="596" y="1.0" width="1" height="29.5" fill="#f4d68c" opacity="0.74"/><rect x="597" y="7.5" width="1" height="23.0" fill="#ffffff" opacity="0.85"/><rect x="598" y="1.800" width="1" height="28.700" fill="#eea6c9"/><rect x="599" y="8.7" width="1" height="8.9" fill="#e0579c" opacity="0.88"/><rect x="601" y="6.3" width="1" height="24.2" fill="#ffffff" opacity="0.82"/><rect x="602" y="5.1" width="1" height="25.4" fill="#ffffff" opacity="0.75"/><rect x="604" y="12.3" width="1" height="11.2" fill="#e0579c" opacity="0.77"/><rect x="605" y="7.4" width="1" height="23.1" fill="#ffffff" opacity="0.78"/><rect x="606" y="7.6" width="1" height="3.0" fill="#7f9fc8" opacity="0.66"/><rect x="607" y="2.8" width="1" height="27.7" fill="#ffffff" opacity="0.95"/><rect x="608" y="1.800" width="1" height="28.700" fill="#f6c9dc"/><rect x="609" y="7.4" width="1" height="23.1" fill="#ffffff" opacity="0.89"/><rect x="610" y="1.0" width="1" height="29.5" fill="#f4d68c" opacity="0.85"/><rect x="611" y="7.6" width="1" height="6.9" fill="#7f9fc8" opacity="0.77"/><rect x="612" y="1.0" width="1" height="29.5" fill="#f4d68c" opacity="0.81"/><rect x="613" y="1.800" width="1" height="28.700" fill="#f8d6e4"/><rect x="617" y="1.0" width="1" height="29.5" fill="#f4d68c" opacity="0.76"/><rect x="618" y="3.6" width="1" height="26.9" fill="#ffffff" opacity="0.93"/><rect x="619" y="5.8" width="1" height="24.7" fill="#ffffff" opacity="0.96"/><rect x="621" y="1.800" width="1" height="28.700" fill="#f3bbd5"/><rect x="622" y="1.800" width="1" height="28.700" fill="#f3bbd5"/><rect x="625" y="1.0" width="1" height="29.5" fill="#f4d68c" opacity="0.83"/><rect x="627" y="1.0" width="1" height="29.5" fill="#f4d68c" opacity="0.77"/><rect x="628" y="1.800" width="1" height="28.700" fill="#f6c9dc"/><rect x="629" y="1.0" width="1" height="29.5" fill="#f4d68c" opacity="0.70"/><rect x="632" y="15.2" width="1" height="5.2" fill="#7f9fc8" opacity="0.96"/><rect x="633" y="1.800" width="1" height="28.700" fill="#f3bbd5"/><rect x="635" y="1.0" width="1" height="29.5" fill="#f4d68c" opacity="0.72"/><rect x="636" y="1.800" width="1" height="28.700" fill="#f3bbd5"/><rect x="637" y="1.800" width="1" height="28.700" fill="#f3bbd5"/><rect x="640" y="1.800" width="1" height="28.700" fill="#f3bbd5"/><rect x="641" y="5.3" width="1" height="15.8" fill="#e0579c" opacity="0.96"/><rect x="642" y="1.800" width="1" height="28.700" fill="#eea6c9"/><rect x="643" y="8.9" width="1" height="21.6" fill="#ffffff" opacity="0.79"/><rect x="645" y="1.0" width="1" height="29.5" fill="#f4d68c" opacity="0.73"/><rect x="646" y="1.800" width="1" height="28.700" fill="#eea6c9"/><rect x="648" y="1.800" width="1" height="28.700" fill="#f6c9dc"/><rect x="650" y="1.800" width="1" height="28.700" fill="#f3bbd5"/><rect x="651" y="1.0" width="1" height="29.5" fill="#f4d68c" opacity="0.77"/><rect x="652" y="1.800" width="1" height="28.700" fill="#eea6c9"/><rect x="653" y="1.800" width="1" height="28.700" fill="#f8d6e4"/><rect x="654" y="1.0" width="1" height="29.5" fill="#f4d68c" opacity="0.73"/><rect x="656" y="1.800" width="1" height="28.700" fill="#eea6c9"/><rect x="657" y="1.800" width="1" height="28.700" fill="#f8d6e4"/><rect x="659" y="3.2" width="1" height="9.9" fill="#e0579c" opacity="0.79"/><rect x="660" y="1.0" width="1" height="29.5" fill="#f4d68c" opacity="0.87"/><rect x="662" y="4.2" width="1" height="12.8" fill="#e0579c" opacity="0.80"/><rect x="663" y="1.800" width="1" height="28.700" fill="#f6c9dc"/><rect x="665" y="1.0" width="1" height="29.5" fill="#f4d68c" opacity="0.92"/><rect x="667" y="1.800" width="1" height="28.700" fill="#f8d6e4"/><rect x="668" y="2.6" width="1" height="27.9" fill="#ffffff" opacity="0.85"/><rect x="670" y="5.4" width="1" height="25.1" fill="#ffffff" opacity="0.84"/><rect x="672" y="2.9" width="1" height="27.6" fill="#ffffff" opacity="0.76"/><rect x="673" y="1.0" width="1" height="29.5" fill="#f4d68c" opacity="0.97"/><rect x="674" y="1.800" width="1" height="28.700" fill="#f6c9dc"/><rect x="676" y="1.0" width="1" height="29.5" fill="#f4d68c" opacity="0.94"/><rect x="677" y="6.3" width="1" height="24.2" fill="#ffffff" opacity="0.68"/><rect x="678" y="1.0" width="1" height="29.5" fill="#f4d68c" opacity="0.96"/><rect x="679" y="3.7" width="1" height="8.4" fill="#e0579c" opacity="0.88"/><rect x="680" y="1.0" width="1" height="29.5" fill="#f4d68c" opacity="0.96"/><rect x="681" y="10.7" width="1" height="19.8" fill="#ffffff" opacity="0.87"/><rect x="682" y="1.800" width="1" height="28.700" fill="#f6c9dc"/><rect x="683" y="1.800" width="1" height="28.700" fill="#f6c9dc"/><rect x="684" y="11.2" width="1" height="8.4" fill="#e0579c" opacity="0.69"/><rect x="685" y="3.2" width="1" height="27.3" fill="#ffffff" opacity="0.98"/><rect x="686" y="1.0" width="1" height="29.5" fill="#f4d68c" opacity="0.72"/><rect x="688" y="1.0" width="1" height="29.5" fill="#f4d68c" opacity="0.80"/><rect x="689" y="4.7" width="1" height="10.1" fill="#e0579c" opacity="0.95"/><rect x="691" y="8.5" width="1" height="22.0" fill="#ffffff" opacity="0.96"/><rect x="692" y="3.6" width="1" height="5.3" fill="#7f9fc8" opacity="0.95"/><rect x="694" y="5.7" width="1" height="24.8" fill="#ffffff" opacity="0.94"/><rect x="695" y="15.9" width="1" height="3.8" fill="#7f9fc8" opacity="0.68"/><rect x="696" y="11.7" width="1" height="7.8" fill="#e0579c" opacity="0.76"/><rect x="698" y="1.0" width="1" height="29.5" fill="#f4d68c" opacity="0.97"/><rect x="699" y="2.7" width="1" height="15.1" fill="#e0579c" opacity="0.93"/><rect x="700" y="1.0" width="1" height="29.5" fill="#f4d68c" opacity="0.85"/><rect x="701" y="5.5" width="1" height="25.0" fill="#ffffff" opacity="0.66"/><rect x="704" y="1.9" width="1" height="15.3" fill="#e0579c" opacity="0.80"/><rect x="705" y="1.800" width="1" height="28.700" fill="#f3bbd5"/><rect x="706" y="7.4" width="1" height="23.1" fill="#ffffff" opacity="0.72"/><rect x="707" y="1.800" width="1" height="28.700" fill="#f3bbd5"/><rect x="708" y="12.0" width="1" height="3.8" fill="#7f9fc8" opacity="0.74"/><rect x="709" y="1.800" width="1" height="28.700" fill="#f6c9dc"/><rect x="710" y="1.0" width="1" height="29.5" fill="#f4d68c" opacity="0.99"/><rect x="712" y="14.0" width="1" height="6.4" fill="#7f9fc8" opacity="0.72"/><rect x="713" y="8.9" width="1" height="10.6" fill="#e0579c" opacity="0.88"/><rect x="715" y="1.800" width="1" height="28.700" fill="#f6c9dc"/><rect x="716" y="1.0" width="1" height="29.5" fill="#f4d68c" opacity="0.83"/><rect x="717" y="10.8" width="1" height="10.1" fill="#e0579c" opacity="0.93"/><rect x="719" y="1.0" width="1" height="29.5" fill="#f4d68c" opacity="0.79"/><rect x="720" y="1.0" width="1" height="29.5" fill="#f4d68c" opacity="0.68"/><rect x="722" y="1.0" width="1" height="29.5" fill="#f4d68c" opacity="0.69"/><rect x="723" y="1.800" width="1" height="28.700" fill="#f8d6e4"/><rect x="724" y="1.0" width="1" height="29.5" fill="#f4d68c" opacity="0.81"/><rect x="725" y="4.2" width="1" height="26.3" fill="#ffffff" opacity="0.94"/><rect x="727" y="2.9" width="1" height="27.6" fill="#ffffff" opacity="0.78"/><rect x="728" y="10.5" width="1" height="9.0" fill="#e0579c" opacity="0.91"/><rect x="729" y="1.800" width="1" height="28.700" fill="#f3bbd5"/><rect x="730" y="7.8" width="1" height="22.7" fill="#ffffff" opacity="0.72"/><rect x="732" y="1.800" width="1" height="28.700" fill="#f8d6e4"/><rect x="733" y="1.800" width="1" height="28.700" fill="#f6c9dc"/><rect x="734" y="1.0" width="1" height="29.5" fill="#f4d68c" opacity="0.95"/><rect x="735" y="4.8" width="1" height="14.4" fill="#e0579c" opacity="0.89"/><rect x="736" y="1.800" width="1" height="28.700" fill="#f3bbd5"/><rect x="739" y="1.0" width="1" height="29.5" fill="#f4d68c" opacity="0.66"/><rect x="741" y="1.0" width="1" height="29.5" fill="#f4d68c" opacity="0.77"/><rect x="742" y="5.7" width="1" height="24.8" fill="#ffffff" opacity="0.90"/><rect x="744" y="1.800" width="1" height="28.700" fill="#eea6c9"/><rect x="746" y="8.2" width="1" height="22.3" fill="#ffffff" opacity="0.65"/><rect x="747" y="1.800" width="1" height="28.700" fill="#eea6c9"/><rect x="748" y="1.800" width="1" height="28.700" fill="#f8d6e4"/><rect x="749" y="1.800" width="1" height="28.700" fill="#f6c9dc"/><rect x="750" y="1.800" width="1" height="28.700" fill="#f6c9dc"/><rect x="751" y="1.0" width="1" height="29.5" fill="#f4d68c" opacity="0.76"/><rect x="752" y="8.5" width="1" height="10.1" fill="#e0579c" opacity="0.98"/><rect x="753" y="1.0" width="1" height="29.5" fill="#f4d68c" opacity="0.82"/><rect x="754" y="1.800" width="1" height="28.700" fill="#eea6c9"/><rect x="756" y="11.5" width="1" height="19.0" fill="#ffffff" opacity="0.78"/><rect x="757" y="16.4" width="1" height="7.5" fill="#7f9fc8" opacity="0.71"/><rect x="758" y="10.3" width="1" height="20.2" fill="#ffffff" opacity="0.77"/><rect x="759" y="6.6" width="1" height="23.9" fill="#ffffff" opacity="0.76"/><rect x="760" y="5.3" width="1" height="7.0" fill="#e0579c" opacity="0.67"/><rect x="761" y="2.5" width="1" height="28.0" fill="#ffffff" opacity="0.96"/><rect x="762" y="1.0" width="1" height="29.5" fill="#f4d68c" opacity="0.76"/><rect x="763" y="1.800" width="1" height="28.700" fill="#f6c9dc"/><rect x="765" y="8.3" width="1" height="22.2" fill="#ffffff" opacity="0.76"/><rect x="766" y="1.800" width="1" height="28.700" fill="#eea6c9"/><rect x="767" y="1.9" width="1" height="13.9" fill="#e0579c" opacity="0.98"/><rect x="768" y="6.4" width="1" height="24.1" fill="#ffffff" opacity="0.97"/><rect x="769" y="1.0" width="1" height="29.5" fill="#f4d68c" opacity="0.76"/><rect x="770" y="1.800" width="1" height="28.700" fill="#f6c9dc"/><rect x="772" y="8.8" width="1" height="21.7" fill="#ffffff" opacity="0.85"/><rect x="773" y="8.7" width="1" height="9.1" fill="#e0579c" opacity="0.72"/><rect x="774" y="1.800" width="1" height="28.700" fill="#f6c9dc"/><rect x="775" y="3.2" width="1" height="11.0" fill="#e0579c" opacity="0.71"/><rect x="776" y="1.800" width="1" height="28.700" fill="#f6c9dc"/><rect x="777" y="1.800" width="1" height="28.700" fill="#eea6c9"/><rect x="778" y="1.0" width="1" height="29.5" fill="#f4d68c" opacity="0.96"/><rect x="779" y="6.3" width="1" height="24.2" fill="#ffffff" opacity="0.70"/><rect x="780" y="1.800" width="1" height="28.700" fill="#eea6c9"/><rect x="782" y="10.5" width="1" height="13.9" fill="#e0579c" opacity="0.73"/><rect x="783" y="1.800" width="1" height="28.700" fill="#f6c9dc"/><rect x="785" y="5.0" width="1" height="9.2" fill="#e0579c" opacity="0.72"/><rect x="786" y="1.0" width="1" height="29.5" fill="#f4d68c" opacity="0.91"/><rect x="787" y="1.800" width="1" height="28.700" fill="#f8d6e4"/><rect x="788" y="7.2" width="1" height="23.3" fill="#ffffff" opacity="0.70"/><rect x="790" y="5.1" width="1" height="12.2" fill="#e0579c" opacity="0.90"/><rect x="791" y="4.2" width="1" height="26.3" fill="#ffffff" opacity="0.78"/><rect x="792" y="5.1" width="1" height="12.6" fill="#e0579c" opacity="0.74"/><rect x="793" y="1.800" width="1" height="28.700" fill="#eea6c9"/><rect x="794" y="1.800" width="1" height="28.700" fill="#eea6c9"/><rect x="795" y="1.800" width="1" height="28.700" fill="#f6c9dc"/><rect x="796" y="13.5" width="1" height="15.7" fill="#e0579c" opacity="0.92"/><rect x="797" y="1.0" width="1" height="29.5" fill="#f4d68c" opacity="0.76"/><rect x="798" y="4.9" width="1" height="9.5" fill="#e0579c" opacity="0.72"/><rect x="799" y="1.0" width="1" height="29.5" fill="#f4d68c" opacity="0.91"/><rect x="800" y="1.800" width="1" height="28.700" fill="#f8d6e4"/><rect x="803" y="10.1" width="1" height="7.7" fill="#e0579c" opacity="0.77"/><rect x="804" y="10.2" width="1" height="20.3" fill="#ffffff" opacity="0.74"/><rect x="805" y="7.0" width="1" height="6.0" fill="#7f9fc8" opacity="0.66"/><rect x="807" y="6.3" width="1" height="24.2" fill="#ffffff" opacity="0.75"/><rect x="808" y="8.1" width="1" height="9.0" fill="#e0579c" opacity="0.78"/><rect x="809" y="1.0" width="1" height="29.5" fill="#f4d68c" opacity="0.73"/><rect x="810" y="1.800" width="1" height="28.700" fill="#eea6c9"/><rect x="811" y="8.6" width="1" height="6.6" fill="#e0579c" opacity="0.66"/><rect x="812" y="11.6" width="1" height="4.4" fill="#7f9fc8" opacity="0.85"/><rect x="814" y="1.0" width="1" height="29.5" fill="#f4d68c" opacity="0.78"/><rect x="816" y="1.800" width="1" height="28.700" fill="#f6c9dc"/><rect x="817" y="4.3" width="1" height="26.2" fill="#ffffff" opacity="0.94"/><rect x="818" y="1.0" width="1" height="29.5" fill="#f4d68c" opacity="0.72"/><rect x="819" y="1.800" width="1" height="28.700" fill="#f3bbd5"/><rect x="821" y="2.0" width="1" height="28.5" fill="#ffffff" opacity="0.81"/><rect x="822" y="1.0" width="1" height="29.5" fill="#f4d68c" opacity="0.88"/><rect x="823" y="1.800" width="1" height="28.700" fill="#f6c9dc"/><rect x="824" y="8.9" width="1" height="21.6" fill="#ffffff" opacity="0.77"/><rect x="825" y="11.1" width="1" height="19.4" fill="#ffffff" opacity="0.93"/><rect x="827" y="12.8" width="1" height="6.3" fill="#7f9fc8" opacity="0.95"/><rect x="828" y="1.800" width="1" height="28.700" fill="#eea6c9"/><rect x="829" y="1.800" width="1" height="28.700" fill="#f3bbd5"/><rect x="830" y="1.0" width="1" height="29.5" fill="#f4d68c" opacity="0.95"/><rect x="832" y="13.1" width="1" height="4.0" fill="#7f9fc8" opacity="0.93"/><rect x="833" y="11.0" width="1" height="19.5" fill="#ffffff" opacity="0.87"/><rect x="834" y="1.0" width="1" height="29.5" fill="#f4d68c" opacity="0.72"/><rect x="835" y="1.800" width="1" height="28.700" fill="#f8d6e4"/><rect x="836" y="10.7" width="1" height="19.8" fill="#ffffff" opacity="0.80"/><rect x="837" y="10.8" width="1" height="12.1" fill="#e0579c" opacity="0.81"/><rect x="838" y="1.0" width="1" height="29.5" fill="#f4d68c" opacity="0.81"/><rect x="839" y="4.4" width="1" height="26.1" fill="#ffffff" opacity="0.94"/><rect x="841" y="1.0" width="1" height="29.5" fill="#f4d68c" opacity="0.84"/><rect x="843" y="1.0" width="1" height="29.5" fill="#f4d68c" opacity="0.92"/><rect x="844" y="10.4" width="1" height="20.1" fill="#ffffff" opacity="0.76"/><rect x="845" y="1.800" width="1" height="28.700" fill="#f8d6e4"/><rect x="846" y="1.0" width="1" height="29.5" fill="#f4d68c" opacity="0.93"/><rect x="848" y="1.800" width="1" height="28.700" fill="#eea6c9"/><rect x="850" y="1.800" width="1" height="28.700" fill="#f6c9dc"/><rect x="851" y="1.800" width="1" height="28.700" fill="#f8d6e4"/><rect x="852" y="1.0" width="1" height="29.5" fill="#f4d68c" opacity="0.93"/><rect x="853" y="7.6" width="1" height="7.2" fill="#e0579c" opacity="0.88"/><rect x="854" y="1.800" width="1" height="28.700" fill="#f6c9dc"/><rect x="855" y="12.7" width="1" height="6.7" fill="#e0579c" opacity="0.73"/><rect x="0" y="30.500" width="856" height="12.200" fill="#0059b8"/><path d="M854.600 0V43" stroke="#333" stroke-width="1.400"/><rect x="851.400" y="7.900" width="4.600" height="17.800" rx="1" fill="#1c1c1c"/><rect x="852.200" y="34" width="2.200" height="6" fill="#9aa"/></svg>
<div style="left:415.4px;top:743.2px;width:857.2px;height:2px;background:#888"></div>
<div style="left:415.4px;top:744px;width:1.2px;height:4.2px;background:#666"></div>
<div style="left:501.4px;top:744px;width:1.2px;height:4.2px;background:#666"></div>
<div style="left:646.4px;top:744px;width:1.2px;height:4.2px;background:#666"></div>
<div style="left:791.1px;top:744px;width:1.2px;height:4.2px;background:#666"></div>
<div style="left:931.4px;top:744px;width:1.2px;height:4.2px;background:#666"></div>
<div style="left:1076.4px;top:744px;width:1.2px;height:4.2px;background:#666"></div>
<div style="left:1216.3px;top:744px;width:1.2px;height:4.2px;background:#666"></div>
<div style="left:1270.6px;top:744px;width:1.2px;height:4.2px;background:#666"></div>
<span id="t60" style="left:496.10px;top:750.00px;font-size:10.4px;color:#333;letter-spacing:-0.364px;transform:scaleX(0.9388);transform-origin:0 0;">Jul</span>
<span id="t61" style="left:638.20px;top:750.00px;font-size:10.4px;color:#333;letter-spacing:-0.364px;transform:scaleX(0.9903);transform-origin:0 0;">Aug</span>
<span id="t62" style="left:783.40px;top:750.00px;font-size:10.4px;color:#333;letter-spacing:-0.364px;transform:scaleX(0.9341);transform-origin:0 0;">Sep</span>
<span id="t63" style="left:923.90px;top:750.00px;font-size:10.4px;color:#333;letter-spacing:0.014px;">Oct</span>
<span id="t64" style="left:1068.10px;top:750.00px;font-size:10.4px;color:#333;letter-spacing:-0.342px;">Nov</span>
<span id="t65" style="left:1208.45px;top:750.00px;font-size:10.4px;color:#333;letter-spacing:-0.364px;transform:scaleX(0.9518);transform-origin:0 0;">Dec</span>
<div style="left:416px;top:768px;width:243px;height:22px;background:#fff;border:1px solid #dcdcdc;border-radius:3px;"></div>
<div style="left:449.2px;top:769px;width:1px;height:22px;background:#dcdcdc"></div>
<div style="left:485px;top:769px;width:1px;height:22px;background:#dcdcdc"></div>
<div style="left:521px;top:769px;width:1px;height:22px;background:#dcdcdc"></div>
<div style="left:556.3px;top:769px;width:1px;height:22px;background:#dcdcdc"></div>
<div style="left:591px;top:769px;width:1px;height:22px;background:#dcdcdc"></div>
<div style="left:622.2px;top:769px;width:1px;height:22px;background:#dcdcdc"></div>
<span id="t66" style="left:425.70px;top:775.00px;font-size:12px;color:#333;letter-spacing:-0.144px;">1D</span>
<span id="t67" style="left:458.30px;top:775.00px;font-size:12px;color:#333;letter-spacing:0.700px;">1W</span>
<span id="t68" style="left:494.80px;top:775.00px;font-size:12px;color:#333;letter-spacing:0.728px;">1M</span>
<span id="t69" style="left:529.80px;top:775.00px;font-size:12px;color:#333;letter-spacing:0.928px;">3M</span>
<span id="t70" style="left:565.00px;top:775.00px;font-size:12px;color:#333;letter-spacing:0.960px;transform:scaleX(1.0095);transform-origin:0 0;">6M</span>
<span id="t71" style="left:600.20px;top:775.00px;font-size:12px;color:#333;letter-spacing:-0.420px;transform:scaleX(0.9883);transform-origin:0 0;">1Y</span>
<span id="t72" style="left:631.30px;top:775.00px;font-size:12px;color:#333;letter-spacing:-0.420px;transform:scaleX(0.9747);transform-origin:0 0;">ALL</span>
<div style="left:677px;top:768px;width:102px;height:22px;background:#fff;border:1px solid #dcdcdc;border-radius:3px;"></div>
<div style="left:678px;top:769px;width:79px;height:22px;background:#eef3fb;border-radius:2px 0 0 2px"></div>
<div style="left:757px;top:769px;width:1px;height:22px;background:#dcdcdc"></div>
<span id="t73" style="left:685.90px;top:775.00px;font-size:12px;color:#0f62be;letter-spacing:-0.356px;">CUSTOM</span>
<svg viewBox="0 0 8.1 4" style="left:742.8px;top:778px;width:8.1px;height:4px;"><polygon points="0,4 8.100000000000023,4 4.050000000000011,0" fill="#aaa"/></svg>
<svg viewBox="0 0 12 11" style="left:762.5px;top:774.5px;width:12px;height:11px;"><rect x=".7" y=".9" width="10.600" height="9" rx="1.200" fill="none" stroke="#555" stroke-width="1.100"/><path d="M2.500 3.300L4.300 5.400L2.500 7.500zM9.500 3.300L7.700 5.400L9.500 7.500z" fill="#555"/></svg>
<svg viewBox="0 0 314 447" style="left:60px;top:344px;width:314px;height:447px"><g fill="none" stroke="#6a0cff" stroke-width="2.2"><path d="M3.90 4.90L310.10 4.90" stroke-dasharray="12.3 3.816" stroke-dashoffset="6.15"/><path d="M3.90 441.70L310.10 441.70" stroke-dasharray="12.3 3.816" stroke-dashoffset="6.15"/><path d="M5.00 3.80L5.00 442.80" stroke-dasharray="12.3 3.959" stroke-dashoffset="6.15"/><path d="M309.00 3.80L309.00 442.80" stroke-dasharray="12.3 3.959" stroke-dashoffset="6.15"/></g></svg>
</div>
</body></html>
